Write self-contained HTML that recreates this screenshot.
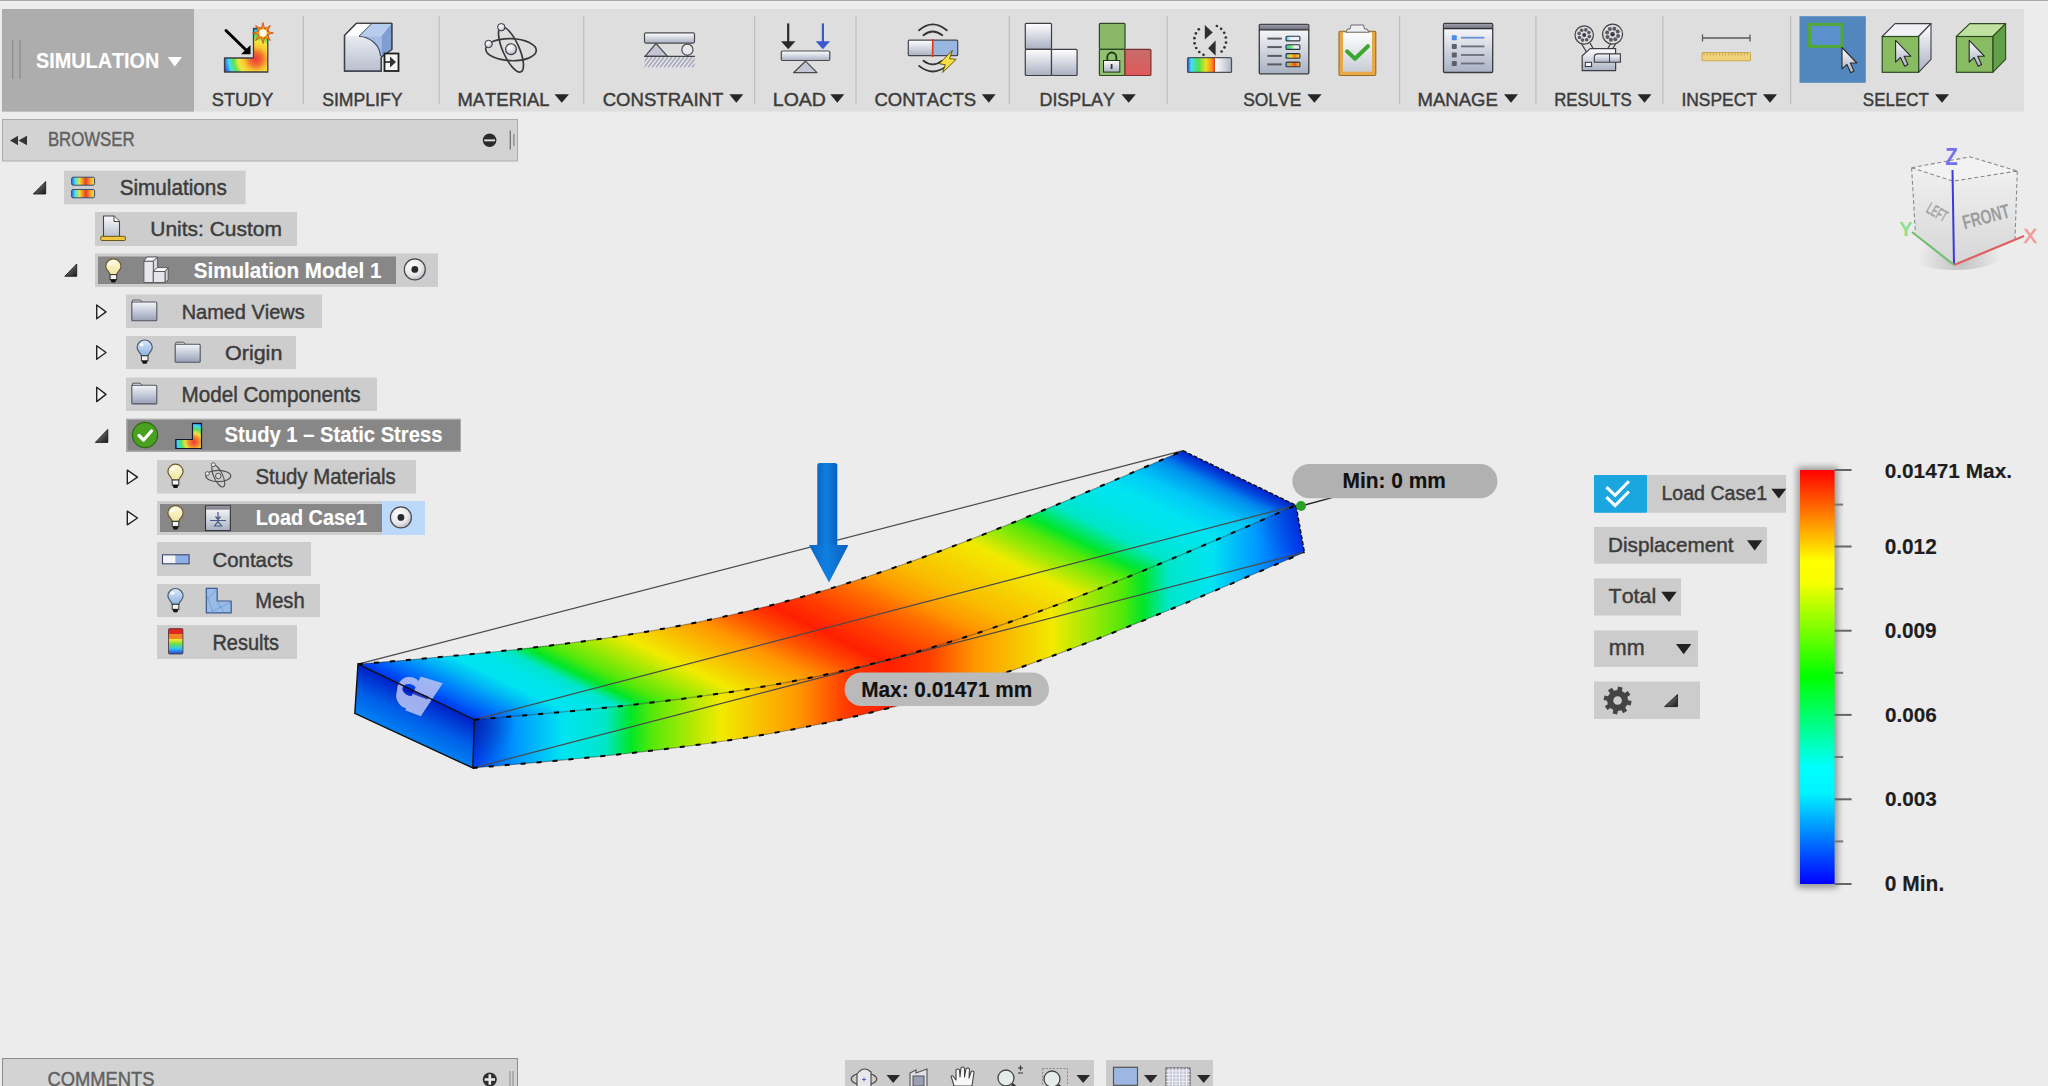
<!DOCTYPE html>
<html><head><meta charset="utf-8"><title>Fusion Simulation</title>
<style>html,body{margin:0;padding:0;width:2048px;height:1086px;overflow:hidden;background:#ececec;font-family:"Liberation Sans",sans-serif}
text{font-family:"Liberation Sans",sans-serif;font-kerning:none}</style></head>
<body><svg width="2048" height="1086" viewBox="0 0 2048 1086" style="position:absolute;left:0;top:0;font-family:'Liberation Sans',sans-serif;font-kerning:none"><defs><linearGradient id="gSilver" x1="0" y1="0" x2="0" y2="1"><stop offset="0" stop-color="#ffffff"/><stop offset="1" stop-color="#a9b0c2"/></linearGradient><linearGradient id="gSilver2" x1="0" y1="0" x2="0" y2="1"><stop offset="0" stop-color="#fbfbfd"/><stop offset="1" stop-color="#b9bfcf"/></linearGradient><linearGradient id="gBlueFace" x1="0" y1="0" x2="0" y2="1"><stop offset="0" stop-color="#c6d8f2"/><stop offset="1" stop-color="#7f9fd0"/></linearGradient><linearGradient id="gRainbowH" x1="0" y1="0" x2="1" y2="0"><stop offset="0" stop-color="#2050e0"/><stop offset="0.18" stop-color="#30e0f0"/><stop offset="0.4" stop-color="#40e040"/><stop offset="0.6" stop-color="#f0f020"/><stop offset="0.8" stop-color="#f89020"/><stop offset="1" stop-color="#e83020"/></linearGradient><linearGradient id="gRainbowV" x1="0" y1="0" x2="0" y2="1"><stop offset="0" stop-color="#e02020"/><stop offset="0.25" stop-color="#f08020"/><stop offset="0.45" stop-color="#f0e020"/><stop offset="0.65" stop-color="#40e040"/><stop offset="0.82" stop-color="#30d0f0"/><stop offset="1" stop-color="#2040e0"/></linearGradient><linearGradient id="gGreen" x1="0" y1="0" x2="0" y2="1"><stop offset="0" stop-color="#96c47a"/><stop offset="1" stop-color="#7cb05c"/></linearGradient><linearGradient id="gGreenTop" x1="0" y1="0" x2="0" y2="1"><stop offset="0" stop-color="#c8e8a8"/><stop offset="1" stop-color="#a8d488"/></linearGradient><linearGradient id="gRed" x1="0" y1="0" x2="0" y2="1"><stop offset="0" stop-color="#c86c6c"/><stop offset="1" stop-color="#e05a5a"/></linearGradient><linearGradient id="gBulbY" x1="0" y1="0" x2="0" y2="1"><stop offset="0" stop-color="#fffbe0"/><stop offset="1" stop-color="#f2e4a0"/></linearGradient><linearGradient id="gBulbB" x1="0" y1="0" x2="0" y2="1"><stop offset="0" stop-color="#d8e8fa"/><stop offset="1" stop-color="#8fb2e0"/></linearGradient><linearGradient id="gFolder" x1="0" y1="0" x2="0" y2="1"><stop offset="0" stop-color="#f4f6fa"/><stop offset="1" stop-color="#98a0b8"/></linearGradient><linearGradient id="gWinBody" x1="0" y1="0" x2="0" y2="1"><stop offset="0" stop-color="#ffffff"/><stop offset="1" stop-color="#a8b0c2"/></linearGradient><linearGradient id="gTitle" x1="0" y1="0" x2="0" y2="1"><stop offset="0" stop-color="#9a9aa8"/><stop offset="1" stop-color="#70707e"/></linearGradient><linearGradient id="gClip" x1="0" y1="0" x2="0" y2="1"><stop offset="0" stop-color="#ffffff"/><stop offset="1" stop-color="#c8ccd6"/></linearGradient><linearGradient id="gTri" x1="0" y1="0" x2="1" y2="1"><stop offset="0" stop-color="#909090"/><stop offset="1" stop-color="#1a1a1a"/></linearGradient><radialGradient id="gStudy" cx="256" cy="59" r="32" gradientUnits="userSpaceOnUse"><stop offset="0" stop-color="#f03838"/><stop offset="0.2" stop-color="#f07030"/><stop offset="0.38" stop-color="#f8c830"/><stop offset="0.55" stop-color="#f0e840"/><stop offset="0.7" stop-color="#60e050"/><stop offset="0.85" stop-color="#40e0f0"/><stop offset="1" stop-color="#3060e0"/></radialGradient><radialGradient id="gSph" cx="0.4" cy="0.35" r="0.7"><stop offset="0" stop-color="#ffffff"/><stop offset="0.6" stop-color="#d8d8e4"/><stop offset="1" stop-color="#9a9aa8"/></radialGradient><linearGradient id="gSolveBar" x1="0" y1="0" x2="1" y2="0"><stop offset="0" stop-color="#3050e0"/><stop offset="0.08" stop-color="#40e0f8"/><stop offset="0.25" stop-color="#50e050"/><stop offset="0.42" stop-color="#f0e020"/><stop offset="0.56" stop-color="#f88820"/><stop offset="0.62" stop-color="#e83a20"/><stop offset="0.63" stop-color="#ffffff"/><stop offset="1" stop-color="#b0b6c6"/></linearGradient><linearGradient id="gSb0" x1="0" y1="0" x2="1" y2="0"><stop offset="0" stop-color="#40c0f0"/><stop offset="0.3" stop-color="#e0f0ff"/><stop offset="0.65" stop-color="#f0f4fa"/><stop offset="1" stop-color="#e8eef8"/></linearGradient><linearGradient id="gSb1" x1="0" y1="0" x2="1" y2="0"><stop offset="0" stop-color="#40c0f0"/><stop offset="0.3" stop-color="#60e060"/><stop offset="0.65" stop-color="#f0f0f0"/><stop offset="1" stop-color="#e0e0e8"/></linearGradient><linearGradient id="gSb2" x1="0" y1="0" x2="1" y2="0"><stop offset="0" stop-color="#40c0f0"/><stop offset="0.3" stop-color="#f0e020"/><stop offset="0.65" stop-color="#f08020"/><stop offset="1" stop-color="#f0e040"/></linearGradient><linearGradient id="gSb3" x1="0" y1="0" x2="1" y2="0"><stop offset="0" stop-color="#40c0f0"/><stop offset="0.3" stop-color="#f0a020"/><stop offset="0.65" stop-color="#e85020"/><stop offset="1" stop-color="#f0d040"/></linearGradient><linearGradient id="gSimI" x1="0" y1="0" x2="1" y2="0"><stop offset="0" stop-color="#3060e0"/><stop offset="0.15" stop-color="#40e0f0"/><stop offset="0.35" stop-color="#f0e030"/><stop offset="0.62" stop-color="#f03a20"/><stop offset="0.8" stop-color="#f8a030"/><stop offset="1" stop-color="#f8e040"/></linearGradient><radialGradient id="gRad269" cx="412.8" cy="266.4" r="13.65" gradientUnits="userSpaceOnUse"><stop offset="0" stop-color="#ffffff"/><stop offset="0.7" stop-color="#e6e6ea"/><stop offset="1" stop-color="#b8b8c0"/></radialGradient><radialGradient id="gStudyS" cx="194" cy="442" r="20" gradientUnits="userSpaceOnUse"><stop offset="0" stop-color="#f03838"/><stop offset="0.25" stop-color="#f08830"/><stop offset="0.45" stop-color="#f0e040"/><stop offset="0.65" stop-color="#50e060"/><stop offset="0.82" stop-color="#40d8f0"/><stop offset="1" stop-color="#2050e0"/></radialGradient><radialGradient id="gRad517" cx="398.9" cy="514.4" r="13.65" gradientUnits="userSpaceOnUse"><stop offset="0" stop-color="#ffffff"/><stop offset="0.7" stop-color="#e6e6ea"/><stop offset="1" stop-color="#b8b8c0"/></radialGradient><linearGradient id="gResI" x1="0" y1="0" x2="0" y2="1"><stop offset="0" stop-color="#e02820"/><stop offset="0.22" stop-color="#e02820"/><stop offset="0.23" stop-color="#f08828"/><stop offset="0.42" stop-color="#f08828"/><stop offset="0.43" stop-color="#f8e830"/><stop offset="0.6" stop-color="#70e040"/><stop offset="0.78" stop-color="#30c8f0"/><stop offset="1" stop-color="#2040d8"/></linearGradient><radialGradient id="gVCsh" cx="1960" cy="262" r="42" gradientUnits="userSpaceOnUse"><stop offset="0" stop-color="#000" stop-opacity="0.18"/><stop offset="1" stop-color="#000" stop-opacity="0"/></radialGradient><linearGradient id="gVCf" x1="0" y1="0" x2="0" y2="1"><stop offset="0" stop-color="#f0f0f0"/><stop offset="1" stop-color="#d6d6d8"/></linearGradient><radialGradient id="gBarSh" cx="0" cy="0" r="1" gradientUnits="userSpaceOnUse"><stop offset="0" stop-color="#000" stop-opacity="0.35"/><stop offset="1" stop-color="#000" stop-opacity="0"/></radialGradient><filter id="blur4" x="-50%" y="-50%" width="200%" height="200%"><feGaussianBlur stdDeviation="3"/></filter><linearGradient id="gBar" x1="0" y1="0" x2="0" y2="1"><stop offset="0" stop-color="#ff0000"/><stop offset="0.11" stop-color="#ff8000"/><stop offset="0.22" stop-color="#ffff00"/><stop offset="0.27" stop-color="#f8ff00"/><stop offset="0.5" stop-color="#00ff00"/><stop offset="0.72" stop-color="#00ffff"/><stop offset="0.78" stop-color="#00f4ff"/><stop offset="1" stop-color="#0000ff"/></linearGradient></defs><rect x="0" y="0" width="2048" height="1.2" fill="#a6a6a6"/>
<rect x="0" y="1.2" width="2048" height="2" fill="#f0f0f0"/>
<rect x="2" y="9" width="2022" height="102.6" fill="#dedede"/>
<rect x="2" y="9" width="192" height="102.6" fill="#adadad"/>
<rect x="12" y="40" width="1.3" height="39" fill="#8e8e8e"/><rect x="19.3" y="40" width="1.3" height="39" fill="#8e8e8e"/>
<text transform="translate(36.03 68.00) scale(0.9339 1)" font-size="21.22" font-weight="bold" fill="#ffffff" stroke="#ffffff" stroke-width="0.15">SIMULATION</text>
<path d="M167.6 57 L182 57 L174.8 66.6 Z" fill="#ffffff"/>
<rect x="302.7" y="16" width="1.2" height="88" fill="#bdbdbd"/>
<rect x="438.6" y="16" width="1.2" height="88" fill="#bdbdbd"/>
<rect x="583.2" y="16" width="1.2" height="88" fill="#bdbdbd"/>
<rect x="754.0" y="16" width="1.2" height="88" fill="#bdbdbd"/>
<rect x="855.4" y="16" width="1.2" height="88" fill="#bdbdbd"/>
<rect x="1008.7" y="16" width="1.2" height="88" fill="#bdbdbd"/>
<rect x="1166.6" y="16" width="1.2" height="88" fill="#bdbdbd"/>
<rect x="1399.0" y="16" width="1.2" height="88" fill="#bdbdbd"/>
<rect x="1535.3" y="16" width="1.2" height="88" fill="#bdbdbd"/>
<rect x="1662.3" y="16" width="1.2" height="88" fill="#bdbdbd"/>
<rect x="1790.0" y="16" width="1.2" height="88" fill="#bdbdbd"/>
<text transform="translate(211.77 106.10) scale(0.9477 1)" font-size="19.19" fill="#3b3b3b" stroke="#3b3b3b" stroke-width="0.45">STUDY</text>
<text transform="translate(322.20 106.10) scale(0.9172 1)" font-size="19.19" fill="#3b3b3b" stroke="#3b3b3b" stroke-width="0.45">SIMPLIFY</text>
<text transform="translate(457.49 106.10) scale(0.9601 1)" font-size="19.19" fill="#3b3b3b" stroke="#3b3b3b" stroke-width="0.45">MATERIAL</text>
<path d="M554.5 94.2 L569.0 94.2 L561.8 102.8 Z" fill="#262626"/>
<text transform="translate(602.66 106.10) scale(0.9676 1)" font-size="19.19" fill="#3b3b3b" stroke="#3b3b3b" stroke-width="0.45">CONSTRAINT</text>
<path d="M729.3 94.2 L743.3 94.2 L736.3 102.8 Z" fill="#262626"/>
<text transform="translate(772.80 106.10) scale(1.0170 1)" font-size="19.19" fill="#3b3b3b" stroke="#3b3b3b" stroke-width="0.45">LOAD</text>
<path d="M830.3 94.2 L844.3 94.2 L837.3 102.8 Z" fill="#262626"/>
<text transform="translate(874.46 106.10) scale(0.9636 1)" font-size="19.19" fill="#3b3b3b" stroke="#3b3b3b" stroke-width="0.45">CONTACTS</text>
<path d="M981.8 94.2 L995.7 94.2 L988.8 102.8 Z" fill="#262626"/>
<text transform="translate(1039.54 106.10) scale(0.9298 1)" font-size="19.19" fill="#3b3b3b" stroke="#3b3b3b" stroke-width="0.45">DISPLAY</text>
<path d="M1121.5 94.2 L1135.8 94.2 L1128.7 102.8 Z" fill="#262626"/>
<text transform="translate(1243.21 106.10) scale(0.9071 1)" font-size="19.19" fill="#3b3b3b" stroke="#3b3b3b" stroke-width="0.45">SOLVE</text>
<path d="M1307.3 94.2 L1321.6 94.2 L1314.4 102.8 Z" fill="#262626"/>
<text transform="translate(1417.48 106.10) scale(0.9659 1)" font-size="19.19" fill="#3b3b3b" stroke="#3b3b3b" stroke-width="0.45">MANAGE</text>
<path d="M1504.0 94.2 L1518.0 94.2 L1511.0 102.8 Z" fill="#262626"/>
<text transform="translate(1554.22 106.10) scale(0.8764 1)" font-size="19.19" fill="#3b3b3b" stroke="#3b3b3b" stroke-width="0.45">RESULTS</text>
<path d="M1637.5 94.2 L1651.5 94.2 L1644.5 102.8 Z" fill="#262626"/>
<text transform="translate(1681.39 106.10) scale(0.9081 1)" font-size="19.19" fill="#3b3b3b" stroke="#3b3b3b" stroke-width="0.45">INSPECT</text>
<path d="M1763.0 94.2 L1777.0 94.2 L1770.0 102.8 Z" fill="#262626"/>
<text transform="translate(1862.83 106.10) scale(0.8851 1)" font-size="19.19" fill="#3b3b3b" stroke="#3b3b3b" stroke-width="0.45">SELECT</text>
<path d="M1935.0 94.2 L1949.0 94.2 L1942.0 102.8 Z" fill="#262626"/>
<path d="M224.5 58 L253.5 58 L253.5 28.5 L267.8 28.5 L267.8 72 L224.5 72 Z" fill="url(#gStudy)" stroke="#3c3c48" stroke-width="1.3" stroke-linejoin="round"/>
<path d="M226 30.5 L246 50" stroke="#000" stroke-width="3" stroke-linecap="round"/>
<path d="M250.5 54.2 L241 54.2 L250.5 45 Z" fill="#000"/>
<path d="M263.0 22.5 L264.7 28.8 L270.4 25.6 L267.2 31.3 L273.5 33.0 L267.2 34.7 L270.4 40.4 L264.7 37.2 L263.0 43.5 L261.3 37.2 L255.6 40.4 L258.8 34.7 L252.5 33.0 L258.8 31.3 L255.6 25.6 L261.3 28.8 Z" fill="#f49a10" stroke="#d04a10" stroke-width="0.8"/>
<circle cx="263" cy="33" r="3.8" fill="#fffbe8"/>
<path d="M344.5 35.5 L356.5 23.3 L391.8 23.3 L391.8 49.5 L381.3 57 L381.3 71.2 L344.5 71.2 Z" fill="url(#gSilver2)" stroke="#3e4048" stroke-width="1.3" stroke-linejoin="round"/>
<path d="M344.5 35.5 L356.5 23.3 L372 23.3 L359 36.2 Z" fill="#ffffff"/>
<path d="M359 36.2 L372 23.3 L391.8 23.3 L381.3 36.2 Z" fill="#b8cdee"/>
<path d="M381.3 36.2 L391.8 23.3 L391.8 49.5 L381.3 57 Z" fill="#7f9fd2"/>
<path d="M359 36.2 C370 37 380 45 380.5 56 L381.3 57 L381.3 36.2 Z" fill="#a4bce4"/>
<path d="M359 36.2 C370 37 380 45 380.5 56" fill="none" stroke="#3e4a60" stroke-width="1.1"/>
<path d="M359 36.2 L372 23.3" stroke="#3e4a60" stroke-width="1"/>
<path d="M344.5 35.5 L356.5 23.3 L391.8 23.3 L391.8 49.5 L381.3 57 L381.3 71.2 L344.5 71.2 Z" fill="none" stroke="#3e4048" stroke-width="1.3" stroke-linejoin="round"/>
<rect x="384.5" y="53.5" width="14" height="17.5" fill="#f4f4f4" stroke="#1e1e1e" stroke-width="1.8"/>
<path d="M384 62 L391 62" stroke="#222" stroke-width="1.6"/><path d="M390 56.5 L396 62 L390 67.5 Z" fill="#333"/>
<g fill="none" stroke="#3a3a3a" stroke-width="1.7"><ellipse cx="511" cy="49.7" rx="25.3" ry="11" transform="rotate(2 511 49.7)"/><ellipse cx="511" cy="49.4" rx="8.2" ry="24.5" transform="rotate(-24 511 49.4)"/></g>
<circle cx="511" cy="49.2" r="5.4" fill="url(#gSph)" stroke="#333" stroke-width="1.1"/>
<circle cx="501.3" cy="27.2" r="3.7" fill="url(#gSph)" stroke="#333" stroke-width="1"/>
<circle cx="488.6" cy="44" r="3.7" fill="url(#gSph)" stroke="#333" stroke-width="1"/>
<rect x="644.5" y="32.8" width="50" height="10.3" rx="1.5" fill="url(#gSilver)" stroke="#4a4a4e" stroke-width="1.2"/>
<path d="M645 56.3 L656 43.5 L667.5 56.3 Z" fill="#c4c6d4" stroke="#4a4a4e" stroke-width="1.2" stroke-linejoin="round"/>
<circle cx="687.4" cy="49.7" r="5.6" fill="#e8e8ee" stroke="#4a4a4e" stroke-width="1.2"/>
<path d="M644 56.3 L695 56.3" stroke="#444" stroke-width="1.3"/>
<rect x="644.5" y="57" width="50" height="10.5" fill="#e4e4ec"/>
<svg x="644.5" y="57" width="50" height="10.5" viewBox="644.5 57 50 10.5" overflow="hidden"><path d="M640.0 67.5 L648.0 57" stroke="#a8aab8" stroke-width="1.6"/><path d="M644.0 67.5 L652.0 57" stroke="#a8aab8" stroke-width="1.6"/><path d="M648.0 67.5 L656.0 57" stroke="#a8aab8" stroke-width="1.6"/><path d="M652.0 67.5 L660.0 57" stroke="#a8aab8" stroke-width="1.6"/><path d="M656.0 67.5 L664.0 57" stroke="#a8aab8" stroke-width="1.6"/><path d="M660.0 67.5 L668.0 57" stroke="#a8aab8" stroke-width="1.6"/><path d="M664.0 67.5 L672.0 57" stroke="#a8aab8" stroke-width="1.6"/><path d="M668.0 67.5 L676.0 57" stroke="#a8aab8" stroke-width="1.6"/><path d="M672.0 67.5 L680.0 57" stroke="#a8aab8" stroke-width="1.6"/><path d="M676.0 67.5 L684.0 57" stroke="#a8aab8" stroke-width="1.6"/><path d="M680.0 67.5 L688.0 57" stroke="#a8aab8" stroke-width="1.6"/><path d="M684.0 67.5 L692.0 57" stroke="#a8aab8" stroke-width="1.6"/><path d="M688.0 67.5 L696.0 57" stroke="#a8aab8" stroke-width="1.6"/><path d="M692.0 67.5 L700.0 57" stroke="#a8aab8" stroke-width="1.6"/></svg>
<path d="M788.2 23.4 L788.2 42" stroke="#2a2a2a" stroke-width="2.2"/><path d="M781 41.3 L795.4 41.3 L788.2 49.2 Z" fill="#2a2a2a"/>
<path d="M822.9 23.4 L822.9 42" stroke="#3a58c8" stroke-width="2.2"/><path d="M815.7 41.3 L830.1 41.3 L822.9 49.2 Z" fill="#3a58d0"/>
<rect x="781.3" y="51" width="48.5" height="9.5" rx="1.2" fill="url(#gSilver)" stroke="#4a4a4e" stroke-width="1.2"/>
<path d="M793.5 72.7 L805.5 61.2 L817 72.7 Z" fill="#c4c6d4" stroke="#4a4a4e" stroke-width="1.2" stroke-linejoin="round"/>
<g fill="none" stroke="#333" stroke-width="1.8" stroke-linecap="round"><path d="M919 30.3 Q932.7 18.5 946.8 30.3"/><path d="M923.4 35.3 Q932.7 27.8 942.3 35.3"/><path d="M923.4 60.8 Q932.7 68 942.3 60.8"/><path d="M919 65.9 Q932.7 77 946.8 65.9"/></g>
<rect x="908.3" y="40.2" width="24.4" height="15.5" fill="url(#gSilver)"/>
<rect x="932.7" y="40.2" width="25" height="15.5" fill="#98b6e0"/>
<rect x="908.3" y="40.2" width="49.4" height="15.5" rx="1" fill="none" stroke="#44464e" stroke-width="1.2"/>
<path d="M932.7 39 L932.7 57" stroke="#e03a10" stroke-width="1.6"/>
<path d="M952.4 50.3 L939.3 63.8 L945.3 64.7 L942.6 72.5 L956.2 59.3 L949.6 58.7 Z" fill="#f8e040" stroke="#6a5a10" stroke-width="1" stroke-linejoin="round"/>
<g stroke="#3e3e44" stroke-width="1.2" fill="url(#gSilver)"><rect x="1025.3" y="23.3" width="26.2" height="26" rx="1"/><rect x="1025.3" y="49.3" width="26.2" height="26.2" rx="1"/><rect x="1051.5" y="49.3" width="25.6" height="26.2" rx="1"/></g>
<rect x="1099.4" y="23.3" width="25.6" height="26" rx="1" fill="#88b868" stroke="#2e4a24" stroke-width="1.2"/>
<rect x="1099.4" y="49.3" width="25.6" height="26.2" rx="1" fill="#90c070" stroke="#2e4a24" stroke-width="1.2"/>
<rect x="1125" y="49.3" width="25.9" height="26.2" rx="1" fill="url(#gRed)" stroke="#7a3030" stroke-width="1.2"/>
<path d="M1107.3 60.6 L1107.3 57 A4.5 4.5 0 0 1 1116.3 57 L1116.3 60.6" fill="none" stroke="#1c3a10" stroke-width="1.8"/>
<rect x="1103.5" y="60.5" width="16.3" height="11.6" fill="url(#gSilver)" stroke="#1c3a10" stroke-width="1"/>
<path d="M1111.6 64 L1111.6 69" stroke="#334" stroke-width="1.8"/>
<rect x="1187.6" y="57.6" width="43.9" height="14.8" rx="1.2" fill="url(#gSolveBar)" stroke="#4a5058" stroke-width="1.3"/>
<circle cx="1203.5" cy="54.8" r="1.35" fill="#333"/><circle cx="1199.3" cy="52.0" r="1.35" fill="#333"/><circle cx="1196.2" cy="48.0" r="1.35" fill="#333"/><circle cx="1194.6" cy="43.3" r="1.35" fill="#333"/><circle cx="1194.4" cy="38.2" r="1.35" fill="#333"/><circle cx="1195.9" cy="33.4" r="1.35" fill="#333"/><circle cx="1198.8" cy="29.3" r="1.35" fill="#333"/><circle cx="1216.9" cy="26.0" r="1.35" fill="#333"/><circle cx="1221.1" cy="28.8" r="1.35" fill="#333"/><circle cx="1224.2" cy="32.8" r="1.35" fill="#333"/><circle cx="1225.8" cy="37.5" r="1.35" fill="#333"/><circle cx="1226.0" cy="42.6" r="1.35" fill="#333"/><circle cx="1224.5" cy="47.4" r="1.35" fill="#333"/><circle cx="1221.6" cy="51.5" r="1.35" fill="#333"/>
<path d="M1204.8 24.9 L1204.8 39.5 L1212.7 32.4 Z" fill="#2e2e2e"/><path d="M1215.6 40.4 L1215.6 55.7 L1208.1 48.2 Z" fill="#2e2e2e"/>
<rect x="1259.3" y="24.3" width="49.5" height="49.5" rx="1" fill="url(#gWinBody)" stroke="#3a3a40" stroke-width="1.3"/>
<rect x="1259.9" y="24.9" width="48.3" height="4.8" fill="url(#gTitle)"/><path d="M1259.3 29.8 L1308.8 29.8" stroke="#2a2a30" stroke-width="1.2"/>
<path d="M1267.4 38.6 L1281.8 38.6" stroke="#5a5a62" stroke-width="2"/>
<rect x="1286" y="36.3" width="13.9" height="4.6" rx="1" fill="url(#gSb0)" stroke="#2a3440" stroke-width="1.1"/>
<path d="M1267.4 47.1 L1281.8 47.1" stroke="#5a5a62" stroke-width="2"/>
<rect x="1286" y="44.8" width="13.9" height="4.6" rx="1" fill="url(#gSb1)" stroke="#2a3440" stroke-width="1.1"/>
<path d="M1267.4 55.9 L1281.8 55.9" stroke="#5a5a62" stroke-width="2"/>
<rect x="1286" y="53.6" width="13.9" height="4.6" rx="1" fill="url(#gSb2)" stroke="#2a3440" stroke-width="1.1"/>
<path d="M1267.4 64.4 L1281.8 64.4" stroke="#5a5a62" stroke-width="2"/>
<rect x="1286" y="62.1" width="13.9" height="4.6" rx="1" fill="url(#gSb3)" stroke="#2a3440" stroke-width="1.1"/>
<rect x="1339" y="31.2" width="36.8" height="44.3" rx="1.2" fill="#e8a848" stroke="#9a6a20" stroke-width="1.1"/>
<rect x="1343" y="32.5" width="29" height="39.2" fill="url(#gClip)"/>
<path d="M1345.8 32.2 L1347.5 29 L1350 29 L1351 25 L1363.5 25 L1364.5 29 L1367 29 L1368.9 32.2 Z" fill="#f0f0f2" stroke="#6a6a70" stroke-width="1"/>
<path d="M1347 51.3 L1355 58.7 L1367.9 46.2" fill="none" stroke="#3ca830" stroke-width="4" stroke-linecap="round" stroke-linejoin="round"/>
<rect x="1443.5" y="23.5" width="49.2" height="49" rx="1.2" fill="url(#gWinBody)" stroke="#3a3a40" stroke-width="1.3"/>
<rect x="1444.1" y="24.1" width="48" height="4.4" fill="url(#gTitle)"/><path d="M1443.5 28.6 L1492.7 28.6" stroke="#2a2a30" stroke-width="1.2"/>
<rect x="1451.8" y="35.2" width="5" height="5" rx="0.8" fill="#4a8ae8"/>
<path d="M1461 37.7 L1484.4 37.7" stroke="#6a90d8" stroke-width="1.8"/>
<rect x="1451.8" y="43.9" width="5" height="5" rx="0.8" fill="#5e6070"/>
<path d="M1461 46.4 L1484.4 46.4" stroke="#6a6e7a" stroke-width="1.8"/>
<rect x="1451.8" y="52.5" width="5" height="5" rx="0.8" fill="#5e6070"/>
<path d="M1461 55.0 L1484.4 55.0" stroke="#6a6e7a" stroke-width="1.8"/>
<rect x="1451.8" y="61.0" width="5" height="5" rx="0.8" fill="#5e6070"/>
<path d="M1461 63.5 L1484.4 63.5" stroke="#6a6e7a" stroke-width="1.8"/>
<circle cx="1584.2" cy="35.0" r="9.2" fill="#dcdce2" stroke="#444" stroke-width="1.2"/>
<circle cx="1589.3" cy="36.6" r="1.8" fill="#5a5a62"/>
<circle cx="1586.7" cy="39.7" r="1.8" fill="#5a5a62"/>
<circle cx="1582.6" cy="40.1" r="1.8" fill="#5a5a62"/>
<circle cx="1579.5" cy="37.5" r="1.8" fill="#5a5a62"/>
<circle cx="1579.1" cy="33.4" r="1.8" fill="#5a5a62"/>
<circle cx="1581.7" cy="30.3" r="1.8" fill="#5a5a62"/>
<circle cx="1585.8" cy="29.9" r="1.8" fill="#5a5a62"/>
<circle cx="1588.9" cy="32.5" r="1.8" fill="#5a5a62"/>
<circle cx="1584.2" cy="35.0" r="2.0" fill="#3a3a40"/>
<circle cx="1612.6" cy="34.2" r="10.0" fill="#dcdce2" stroke="#444" stroke-width="1.2"/>
<circle cx="1618.1" cy="35.9" r="2.0" fill="#5a5a62"/>
<circle cx="1615.3" cy="39.3" r="2.0" fill="#5a5a62"/>
<circle cx="1610.9" cy="39.7" r="2.0" fill="#5a5a62"/>
<circle cx="1607.5" cy="36.9" r="2.0" fill="#5a5a62"/>
<circle cx="1607.1" cy="32.5" r="2.0" fill="#5a5a62"/>
<circle cx="1609.9" cy="29.1" r="2.0" fill="#5a5a62"/>
<circle cx="1614.3" cy="28.7" r="2.0" fill="#5a5a62"/>
<circle cx="1617.7" cy="31.5" r="2.0" fill="#5a5a62"/>
<circle cx="1612.6" cy="34.2" r="2.2" fill="#3a3a40"/>
<path d="M1581 43 L1589 56 M1590 43 L1594 50 M1607 50 L1611 43 M1612 50 L1616 43" stroke="#444" stroke-width="1.3"/>
<path d="M1582.2 55.7 L1590.1 48.6 L1615.6 48.6 L1615.6 70.7 L1582.2 70.7 Z" fill="url(#gSilver)" stroke="#3e3e44" stroke-width="1.2" stroke-linejoin="round"/>
<path d="M1594.3 62.3 L1594.3 57 Q1594.3 53.9 1598 53.9 L1620.4 53.9 L1620.4 62.3 Z" fill="url(#gSilver)" stroke="#3e3e44" stroke-width="1.1"/>
<path d="M1609.5 53.9 L1609.5 62.3" stroke="#3e3e44" stroke-width="1"/>
<rect x="1585.3" y="62.3" width="6.3" height="4.2" fill="#f4f4f8" stroke="#333" stroke-width="1"/>
<path d="M1702.5 38 L1750 38 M1702.5 34.5 L1702.5 41.5 M1750 34.5 L1750 41.5" stroke="#5a5a5a" stroke-width="1.3"/>
<rect x="1702" y="52.5" width="48.5" height="8.3" rx="0.8" fill="#f0d27a" stroke="#c8a850" stroke-width="1"/>
<path d="M1704.0 52.8 L1704.0 55.5" stroke="#b89840" stroke-width="0.7"/><path d="M1707.1 52.8 L1707.1 55.5" stroke="#b89840" stroke-width="0.7"/><path d="M1710.2 52.8 L1710.2 55.5" stroke="#b89840" stroke-width="0.7"/><path d="M1713.3 52.8 L1713.3 55.5" stroke="#b89840" stroke-width="0.7"/><path d="M1716.4 52.8 L1716.4 55.5" stroke="#b89840" stroke-width="0.7"/><path d="M1719.5 52.8 L1719.5 55.5" stroke="#b89840" stroke-width="0.7"/><path d="M1722.6 52.8 L1722.6 55.5" stroke="#b89840" stroke-width="0.7"/><path d="M1725.7 52.8 L1725.7 55.5" stroke="#b89840" stroke-width="0.7"/><path d="M1728.8 52.8 L1728.8 55.5" stroke="#b89840" stroke-width="0.7"/><path d="M1731.9 52.8 L1731.9 55.5" stroke="#b89840" stroke-width="0.7"/><path d="M1735.0 52.8 L1735.0 55.5" stroke="#b89840" stroke-width="0.7"/><path d="M1738.1 52.8 L1738.1 55.5" stroke="#b89840" stroke-width="0.7"/><path d="M1741.2 52.8 L1741.2 55.5" stroke="#b89840" stroke-width="0.7"/><path d="M1744.3 52.8 L1744.3 55.5" stroke="#b89840" stroke-width="0.7"/><path d="M1747.4 52.8 L1747.4 55.5" stroke="#b89840" stroke-width="0.7"/>
<rect x="1799.5" y="16.2" width="66.3" height="66.6" fill="#5287bd"/>
<rect x="1809.5" y="24.4" width="32.5" height="22" fill="#5a90cc" stroke="#50a838" stroke-width="3"/>
<path d="M1842.0 47.5 L1842.0 68.8 L1846.8 64.3 L1850.7 72.7 L1854.1 71.0 L1850.3 63.0 L1856.8 63.0 Z" fill="url(#gSilver)" stroke="#2a2a2a" stroke-width="1.1" stroke-linejoin="round"/>
<path d="M1882.2 36.5 L1895 23.6 L1931 23.6 L1918.6 36.5 Z" fill="#f2f2f6" stroke="#3e3e44" stroke-width="1.1" stroke-linejoin="round"/>
<path d="M1918.6 36.5 L1931 23.6 L1931 59.4 L1918.6 72.3 Z" fill="url(#gSilver)" stroke="#3e3e44" stroke-width="1.1" stroke-linejoin="round"/>
<rect x="1882.2" y="36.5" width="36.4" height="35.8" fill="#88bb62" stroke="#2e4a22" stroke-width="1.2"/>
<path d="M1895.6 40.3 L1895.6 62.1 L1900.5 57.5 L1904.6 66.2 L1908.0 64.4 L1904.1 56.2 L1910.8 56.2 Z" fill="url(#gSilver)" stroke="#2a2a2a" stroke-width="1.1" stroke-linejoin="round"/>
<path d="M1956.4 36.5 L1969.7 23.6 L2005.6 23.6 L1992.8 36.5 Z" fill="#c0e2a0" stroke="#2e4a22" stroke-width="1.1" stroke-linejoin="round"/>
<path d="M1992.8 36.5 L2005.6 23.6 L2005.6 59.4 L1992.8 72.3 Z" fill="#62a048" stroke="#2e4a22" stroke-width="1.1" stroke-linejoin="round"/>
<rect x="1956.4" y="36.5" width="36.4" height="35.8" fill="#88bb62" stroke="#2e4a22" stroke-width="1.2"/>
<path d="M1969.2 40.3 L1969.2 62.1 L1974.1 57.5 L1978.2 66.2 L1981.6 64.4 L1977.7 56.2 L1984.4 56.2 Z" fill="url(#gSilver)" stroke="#2a2a2a" stroke-width="1.1" stroke-linejoin="round"/>
<rect x="2.5" y="119.5" width="515" height="41.5" fill="#d3d3d3" stroke="#ababab" stroke-width="1"/>
<path d="M10 140.5 L18 135.8 L18 145.3 Z M18.5 140.5 L27 135.8 L27 145.3 Z" fill="#333"/>
<text transform="translate(47.92 146.20) scale(0.8135 1)" font-size="20.64" fill="#616161" stroke="#616161" stroke-width="0.45">BROWSER</text>
<circle cx="489.6" cy="140.3" r="6.8" fill="#2a2a2a"/><rect x="484.2" y="139.4" width="10.8" height="1.9" fill="#e0e0e0"/>
<rect x="509.6" y="130.5" width="1.4" height="19" fill="#7a7a7a"/><rect x="513.2" y="134" width="1.3" height="12" fill="#8a8a8a"/>
<rect x="64.0" y="170.7" width="181.6" height="33.6" fill="#cdcdcd"/>
<text transform="translate(119.66 194.80) scale(0.9763 1)" font-size="21.22" fill="#3c3c3c" stroke="#3c3c3c" stroke-width="0.45">Simulations</text>
<rect x="95.0" y="212.0" width="202.0" height="34.0" fill="#cdcdcd"/>
<text transform="translate(150.28 236.20) scale(0.9952 1)" font-size="21.08" fill="#3c3c3c" stroke="#3c3c3c" stroke-width="0.45">Units: Custom</text>
<rect x="95.0" y="253.4" width="343.0" height="33.6" fill="#cdcdcd"/>
<rect x="98.0" y="256.5" width="298.0" height="27.5" fill="#878787"/>
<text transform="translate(193.71 277.60) scale(0.9332 1)" font-size="22.09" font-weight="bold" fill="#ffffff" stroke="#ffffff" stroke-width="0.15">Simulation Model 1</text>
<rect x="126.0" y="294.5" width="196.0" height="33.5" fill="#cdcdcd"/>
<text transform="translate(181.66 318.70) scale(0.9531 1)" font-size="20.93" fill="#3c3c3c" stroke="#3c3c3c" stroke-width="0.45">Named Views</text>
<rect x="126.0" y="336.0" width="170.0" height="33.0" fill="#cdcdcd"/>
<text transform="translate(224.98 360.00) scale(1.0284 1)" font-size="20.93" fill="#3c3c3c" stroke="#3c3c3c" stroke-width="0.45">Origin</text>
<rect x="126.0" y="377.5" width="251.0" height="33.5" fill="#cdcdcd"/>
<text transform="translate(181.51 401.80) scale(0.9598 1)" font-size="21.51" fill="#3c3c3c" stroke="#3c3c3c" stroke-width="0.45">Model Components</text>
<rect x="126.0" y="418.6" width="335.0" height="33.4" fill="#ababab"/>
<rect x="127.5" y="420.0" width="332.5" height="30.5" fill="#878787"/>
<text transform="translate(224.62 442.40) scale(0.9328 1)" font-size="21.66" font-weight="bold" fill="#ffffff" stroke="#ffffff" stroke-width="0.15">Study 1 – Static Stress</text>
<rect x="157.0" y="460.0" width="259.0" height="33.5" fill="#cdcdcd"/>
<text transform="translate(255.48 483.80) scale(0.9468 1)" font-size="21.51" fill="#3c3c3c" stroke="#3c3c3c" stroke-width="0.45">Study Materials</text>
<rect x="157.0" y="501.0" width="268.0" height="34.0" fill="#bcd8fb"/>
<rect x="157.0" y="501.0" width="225.0" height="34.0" fill="#cdcdcd"/>
<rect x="160.0" y="504.0" width="222.0" height="28.0" fill="#878787"/>
<text transform="translate(255.67 525.30) scale(0.9179 1)" font-size="21.66" font-weight="bold" fill="#ffffff" stroke="#ffffff" stroke-width="0.15">Load Case1</text>
<rect x="157.0" y="542.0" width="154.0" height="34.0" fill="#cdcdcd"/>
<text transform="translate(212.56 566.70) scale(0.9811 1)" font-size="20.78" fill="#3c3c3c" stroke="#3c3c3c" stroke-width="0.45">Contacts</text>
<rect x="157.0" y="584.0" width="163.0" height="33.0" fill="#cdcdcd"/>
<text transform="translate(255.34 608.20) scale(0.9322 1)" font-size="21.66" fill="#3c3c3c" stroke="#3c3c3c" stroke-width="0.45">Mesh</text>
<rect x="157.0" y="625.0" width="140.0" height="34.0" fill="#cdcdcd"/>
<text transform="translate(212.46 649.60) scale(0.9035 1)" font-size="22.09" fill="#3c3c3c" stroke="#3c3c3c" stroke-width="0.45">Results</text>
<path d="M33.3 194.0 L45.7 181.5 L45.7 194.0 Z" fill="url(#gTri)" stroke="#111" stroke-width="0.8" stroke-linejoin="round"/>
<path d="M64.8 276.3 L76.7 264.0 L76.7 276.3 Z" fill="url(#gTri)" stroke="#111" stroke-width="0.8" stroke-linejoin="round"/>
<path d="M95.3 442.4 L107.8 429.4 L107.8 442.4 Z" fill="url(#gTri)" stroke="#111" stroke-width="0.8" stroke-linejoin="round"/>
<path d="M96.7 305.0 L106.0 311.9 L96.7 318.8 Z" fill="#f4f4f4" stroke="#222" stroke-width="1.4" stroke-linejoin="round"/>
<path d="M96.7 345.7 L106.0 352.5 L96.7 359.3 Z" fill="#f4f4f4" stroke="#222" stroke-width="1.4" stroke-linejoin="round"/>
<path d="M96.7 387.2 L106.0 394.4 L96.7 401.6 Z" fill="#f4f4f4" stroke="#222" stroke-width="1.4" stroke-linejoin="round"/>
<path d="M127.3 470.2 L137.5 477.1 L127.3 484.0 Z" fill="#f4f4f4" stroke="#222" stroke-width="1.4" stroke-linejoin="round"/>
<path d="M127.3 511.1 L137.5 518.0 L127.3 524.8 Z" fill="#f4f4f4" stroke="#222" stroke-width="1.4" stroke-linejoin="round"/>
<rect x="71.6" y="177.2" width="23" height="8" rx="1.5" fill="url(#gSimI)" stroke="#3a4a70" stroke-width="1"/>
<rect x="71.6" y="189.5" width="23" height="8.3" rx="1.5" fill="url(#gSimI)" stroke="#3a4a70" stroke-width="1"/>
<path d="M103.5 216 L114 216 L119.5 221.5 L119.5 237 L103.5 237 Z" fill="url(#gSilver2)" stroke="#444" stroke-width="1.1" stroke-linejoin="round"/>
<path d="M114 216 L114 221.5 L119.5 221.5" fill="#f8f8f8" stroke="#444" stroke-width="1"/>
<rect x="100.8" y="236.3" width="24.5" height="4.2" rx="0.8" fill="#f0c840" stroke="#6a5418" stroke-width="1"/>
<path d="M110.1 274.6 C109.6 271.8 105.8 269.8 105.8 266.4 A7.6 7.6 0 1 1 121.0 266.4 C121.0 269.8 117.2 271.8 116.7 274.6 Z" fill="url(#gBulbY)" stroke="#6a5a30" stroke-width="1.2"/><rect x="110.1" y="274.6" width="6.6" height="5" fill="#f4f4f4" stroke="#333" stroke-width="1"/><path d="M110.4 279.6 L116.4 279.6 L115.2 282.6 L111.6 282.6 Z" fill="#111"/><ellipse cx="110.4" cy="263.6" rx="2.2" ry="1.8" fill="#ffffff" opacity="0.75"/>
<g stroke="#555" stroke-width="0.9" stroke-linejoin="round"><path d="M143.9 261.3 L147 257 L157.6 257 L153.3 261.3 Z" fill="#fafafa"/><path d="M153.3 261.3 L157.6 257 L157.6 267.6 L153.3 271.5 Z" fill="#d8d8de"/><path d="M143.9 261.3 L153.3 261.3 L153.3 282.5 L143.9 282.5 Z" fill="#e8e8ee"/><path d="M153.3 271.5 L157 267.6 L168.2 267.6 L165 271.5 Z" fill="#fafafa"/><path d="M165 271.5 L168.2 267.6 L168.2 280 L165 282.5 Z" fill="#d0d0d8"/><path d="M153.3 271.5 L165 271.5 L165 282.5 L153.3 282.5 Z" fill="#e4e4ea"/></g>
<circle cx="414.8" cy="269.4" r="10.5" fill="url(#gRad269)" stroke="#4a4a4a" stroke-width="1.2"/><circle cx="414.8" cy="269.4" r="3.4" fill="#2a2a2a"/>
<path d="M131.8 302.7 L132.8 300.0 L140.3 300.0 L141.8 301.8 L141.8 302.7 L131.8 302.7 Z" fill="#e6e8ee" stroke="#555" stroke-width="1"/><rect x="131.8" y="302.0" width="25.0" height="18.7" rx="1" fill="url(#gFolder)" stroke="#505560" stroke-width="1.1"/>
<path d="M141.4 355.8 C140.9 353.0 137.1 351.0 137.1 347.6 A7.6 7.6 0 1 1 152.3 347.6 C152.3 351.0 148.5 353.0 148.0 355.8 Z" fill="url(#gBulbB)" stroke="#4a5a70" stroke-width="1.2"/><rect x="141.4" y="355.8" width="6.6" height="5" fill="#f4f4f4" stroke="#333" stroke-width="1"/><path d="M141.7 360.8 L147.7 360.8 L146.5 363.8 L142.9 363.8 Z" fill="#111"/><ellipse cx="141.7" cy="344.8" rx="2.2" ry="1.8" fill="#ffffff" opacity="0.75"/>
<path d="M175.2 344.9 L176.2 342.2 L183.7 342.2 L185.2 344.0 L185.2 344.9 L175.2 344.9 Z" fill="#e6e8ee" stroke="#555" stroke-width="1"/><rect x="175.2" y="344.2" width="25.0" height="18.0" rx="1" fill="url(#gFolder)" stroke="#505560" stroke-width="1.1"/>
<path d="M131.8 385.9 L132.8 383.2 L140.3 383.2 L141.8 385.0 L141.8 385.9 L131.8 385.9 Z" fill="#e6e8ee" stroke="#555" stroke-width="1"/><rect x="131.8" y="385.2" width="25.0" height="18.7" rx="1" fill="url(#gFolder)" stroke="#505560" stroke-width="1.1"/>
<circle cx="145" cy="435" r="12.6" fill="#4aa020" stroke="#2e6a10" stroke-width="1.2"/>
<path d="M139 435.5 L143.5 440 L151.5 431" fill="none" stroke="#ffffff" stroke-width="3.2" stroke-linecap="round" stroke-linejoin="round"/>
<path d="M175.8 439.5 L192.5 439.5 L192.5 423.3 L201.5 423.3 L201.5 448.5 L175.8 448.5 Z" fill="url(#gStudyS)" stroke="#101830" stroke-width="1.2"/>
<path d="M172.2 480.0 C171.7 477.2 167.9 475.2 167.9 471.8 A7.6 7.6 0 1 1 183.1 471.8 C183.1 475.2 179.3 477.2 178.8 480.0 Z" fill="url(#gBulbY)" stroke="#6a5a30" stroke-width="1.2"/><rect x="172.2" y="480.0" width="6.6" height="5" fill="#f4f4f4" stroke="#333" stroke-width="1"/><path d="M172.5 485.0 L178.5 485.0 L177.3 488.0 L173.7 488.0 Z" fill="#111"/><ellipse cx="172.5" cy="469.0" rx="2.2" ry="1.8" fill="#ffffff" opacity="0.75"/>
<g fill="none" stroke="#505050" stroke-width="1.1"><ellipse cx="218.3" cy="476" rx="12.5" ry="5.6"/><ellipse cx="218.3" cy="476" rx="4.4" ry="12" transform="rotate(-25 218.3 476)"/></g>
<circle cx="218.3" cy="476" r="2.8" fill="#d8d8de" stroke="#505050" stroke-width="1"/><circle cx="213.3" cy="464.7" r="2" fill="#e8e8ee" stroke="#505050" stroke-width="0.9"/><circle cx="207.3" cy="473.6" r="2" fill="#e8e8ee" stroke="#505050" stroke-width="0.9"/>
<path d="M172.2 521.4 C171.7 518.6 167.9 516.6 167.9 513.2 A7.6 7.6 0 1 1 183.1 513.2 C183.1 516.6 179.3 518.6 178.8 521.4 Z" fill="url(#gBulbY)" stroke="#6a5a30" stroke-width="1.2"/><rect x="172.2" y="521.4" width="6.6" height="5" fill="#f4f4f4" stroke="#333" stroke-width="1"/><path d="M172.5 526.4 L178.5 526.4 L177.3 529.4 L173.7 529.4 Z" fill="#111"/><ellipse cx="172.5" cy="510.4" rx="2.2" ry="1.8" fill="#ffffff" opacity="0.75"/>
<rect x="205.5" y="505.8" width="24.8" height="24.8" fill="url(#gWinBody)" stroke="#333" stroke-width="1.1"/><rect x="206" y="506.3" width="23.8" height="3.4" fill="#8a8a94"/>
<path d="M210 520.5 L226 520.5 M218 512 L218 519 M215.5 516.5 L218 519.5 L220.5 516.5 M214.5 526 L218 521.5 L221.5 526 Z" fill="none" stroke="#4a5a80" stroke-width="1.2"/>
<circle cx="400.9" cy="517.4" r="10.5" fill="url(#gRad517)" stroke="#4a4a4a" stroke-width="1.2"/><circle cx="400.9" cy="517.4" r="3.4" fill="#2a2a2a"/>
<rect x="162.5" y="554.8" width="13" height="9" fill="#f4f4f8"/><rect x="175.5" y="554.8" width="13.6" height="9" fill="#8eb0e4"/><rect x="162.5" y="554.8" width="26.6" height="9" fill="none" stroke="#3a4870" stroke-width="1.1"/>
<path d="M172.2 604.3 C171.7 601.5 167.9 599.5 167.9 596.1 A7.6 7.6 0 1 1 183.1 596.1 C183.1 599.5 179.3 601.5 178.8 604.3 Z" fill="url(#gBulbB)" stroke="#4a5a70" stroke-width="1.2"/><rect x="172.2" y="604.3" width="6.6" height="5" fill="#f4f4f4" stroke="#333" stroke-width="1"/><path d="M172.5 609.3 L178.5 609.3 L177.3 612.3 L173.7 612.3 Z" fill="#111"/><ellipse cx="172.5" cy="593.3" rx="2.2" ry="1.8" fill="#ffffff" opacity="0.75"/>
<path d="M206.3 588.3 L217.2 588.3 L217.2 601 L231.2 601 L231.2 612.8 L206.3 612.8 Z" fill="#98bce8" stroke="#3a5a90" stroke-width="1.2" stroke-linejoin="round"/>
<path d="M206.5 600 L217 589 M210 612.5 L231 602 M217 601 L224 612.5 M206.5 594 L213 612.5" stroke="#6a90c8" stroke-width="0.7"/>
<rect x="168.5" y="628.6" width="14.4" height="25.4" rx="1" fill="url(#gResI)" stroke="#5a3a40" stroke-width="0.9"/>
<rect x="2.5" y="1058.5" width="515" height="40" fill="#d3d3d3" stroke="#8c8c8c" stroke-width="1"/>
<text transform="translate(47.47 1086.00) scale(0.8902 1)" font-size="20.64" fill="#616161" stroke="#616161" stroke-width="0.45">COMMENTS</text>
<circle cx="489.8" cy="1079.5" r="7" fill="#2e2e2e"/><rect x="484.6" y="1078.2" width="10.4" height="2.6" fill="#e8e8e8"/><rect x="488.5" y="1074.3" width="2.6" height="10.4" fill="#e8e8e8"/>
<rect x="509.5" y="1071" width="1" height="18" fill="#8a8a8a"/><rect x="512.5" y="1071" width="1" height="18" fill="#8a8a8a"/>
<rect x="845" y="1060" width="249" height="30" fill="#cbcbcb"/>
<rect x="1106" y="1060" width="107" height="30" fill="#cbcbcb"/>
<ellipse cx="864" cy="1079" rx="12.8" ry="6" fill="none" stroke="#444" stroke-width="1.1"/>
<path d="M857 1086 L857 1074 Q864 1065 871 1072 L871 1086" fill="#e8e8ec" stroke="#444" stroke-width="1.1"/>
<path d="M862 1079.5 L866 1079.5 M864 1077.5 L864 1081.5" stroke="#4a6ac8" stroke-width="1"/>
<path d="M886.5 1075 L900 1075 L893.2 1083 Z M1076.5 1075 L1090 1075 L1083.2 1083 Z M1144 1075 L1157.5 1075 L1150.7 1083 Z M1197 1075 L1210.5 1075 L1203.7 1083 Z" fill="#2a2a2a"/>
<path d="M910 1086 L910 1073 L916 1070 L916 1073 L927 1069 L927 1086" fill="#e0e0e6" stroke="#555" stroke-width="1.1"/><rect x="913" y="1076" width="11" height="10" fill="#9aa0b4" stroke="#555" stroke-width="1"/>
<path d="M954 1086 L952 1079 Q950 1075 953 1076 L956 1080 L956 1070 Q958 1068 959.5 1070 L960 1077 L961 1068 Q963 1066 964.5 1068 L964.5 1077 L966 1069 Q968 1067 969.5 1069 L969 1078 L971 1072 Q973 1070 974 1072 L972 1086 Z" fill="#f8f8f8" stroke="#444" stroke-width="1.1" stroke-linejoin="round"/>
<circle cx="1006" cy="1078" r="8" fill="#e4ecec" stroke="#444" stroke-width="1.3"/><path d="M1012 1084 L1016 1088" stroke="#333" stroke-width="3"/>
<path d="M1018 1068 L1023 1068 M1020.5 1065.5 L1020.5 1070.5 M1018 1073 L1023 1073" stroke="#333" stroke-width="1.2"/>
<circle cx="1052" cy="1079" r="8" fill="#e4ecec" stroke="#444" stroke-width="1.3"/><path d="M1058 1085 L1062 1089" stroke="#333" stroke-width="3"/>
<rect x="1042.5" y="1068.5" width="25" height="18" fill="none" stroke="#777" stroke-width="0.8" stroke-dasharray="2 1.5"/>
<rect x="1113.5" y="1067.3" width="24" height="18" fill="#9cb8e2" stroke="#555" stroke-width="1.2"/>
<rect x="1166" y="1068" width="24" height="18" fill="#c8c8d8" stroke="#555" stroke-width="1"/>
<path d="M1169.0 1068 L1169.0 1086" stroke="#f0f0f8" stroke-width="0.9"/><path d="M1172.5 1068 L1172.5 1086" stroke="#f0f0f8" stroke-width="0.9"/><path d="M1176.0 1068 L1176.0 1086" stroke="#f0f0f8" stroke-width="0.9"/><path d="M1179.5 1068 L1179.5 1086" stroke="#f0f0f8" stroke-width="0.9"/><path d="M1183.0 1068 L1183.0 1086" stroke="#f0f0f8" stroke-width="0.9"/><path d="M1186.5 1068 L1186.5 1086" stroke="#f0f0f8" stroke-width="0.9"/>
<path d="M1166 1071.0 L1190 1071.0" stroke="#f0f0f8" stroke-width="0.9"/><path d="M1166 1074.5 L1190 1074.5" stroke="#f0f0f8" stroke-width="0.9"/><path d="M1166 1078.0 L1190 1078.0" stroke="#f0f0f8" stroke-width="0.9"/><path d="M1166 1081.5 L1190 1081.5" stroke="#f0f0f8" stroke-width="0.9"/><path d="M1166 1085.0 L1190 1085.0" stroke="#f0f0f8" stroke-width="0.9"/>
<defs><linearGradient id="bTop" gradientUnits="userSpaceOnUse" x1="358.00" y1="664.20" x2="605.48" y2="164.61"><stop offset="-0.0000" stop-color="#004bf2"/><stop offset="0.0038" stop-color="#0059f5"/><stop offset="0.0077" stop-color="#0066f7"/><stop offset="0.0115" stop-color="#0074f9"/><stop offset="0.0154" stop-color="#0082fc"/><stop offset="0.0192" stop-color="#0090fe"/><stop offset="0.0231" stop-color="#009cfe"/><stop offset="0.0269" stop-color="#00a1fd"/><stop offset="0.0308" stop-color="#00a7fc"/><stop offset="0.0346" stop-color="#00acfb"/><stop offset="0.0385" stop-color="#00b2fa"/><stop offset="0.0423" stop-color="#00b7fa"/><stop offset="0.0462" stop-color="#00bcf9"/><stop offset="0.0500" stop-color="#00c2f8"/><stop offset="0.0539" stop-color="#00c7f7"/><stop offset="0.0578" stop-color="#00cdf6"/><stop offset="0.0616" stop-color="#00d2f5"/><stop offset="0.0655" stop-color="#00d5f5"/><stop offset="0.0694" stop-color="#00d7f4"/><stop offset="0.0733" stop-color="#00daf4"/><stop offset="0.0772" stop-color="#00dcf3"/><stop offset="0.0811" stop-color="#00dff3"/><stop offset="0.0850" stop-color="#00e1f2"/><stop offset="0.0889" stop-color="#00e4f2"/><stop offset="0.0928" stop-color="#00e4f1"/><stop offset="0.0967" stop-color="#00e4f0"/><stop offset="0.1006" stop-color="#00e4ee"/><stop offset="0.1045" stop-color="#00e4ed"/><stop offset="0.1084" stop-color="#00e4ec"/><stop offset="0.1124" stop-color="#00e4eb"/><stop offset="0.1163" stop-color="#00e4ea"/><stop offset="0.1203" stop-color="#00e5e4"/><stop offset="0.1242" stop-color="#00e5de"/><stop offset="0.1282" stop-color="#00e5d9"/><stop offset="0.1322" stop-color="#00e5d3"/><stop offset="0.1362" stop-color="#00e6ce"/><stop offset="0.1401" stop-color="#00e6c8"/><stop offset="0.1441" stop-color="#00e6a8"/><stop offset="0.1481" stop-color="#00e688"/><stop offset="0.1522" stop-color="#00e668"/><stop offset="0.1562" stop-color="#00e648"/><stop offset="0.1602" stop-color="#00e628"/><stop offset="0.1643" stop-color="#0fe622"/><stop offset="0.1683" stop-color="#1ee71d"/><stop offset="0.1724" stop-color="#2ce717"/><stop offset="0.1764" stop-color="#3be712"/><stop offset="0.1805" stop-color="#4ae80c"/><stop offset="0.1846" stop-color="#56e80a"/><stop offset="0.1887" stop-color="#5fe809"/><stop offset="0.1928" stop-color="#69e808"/><stop offset="0.1970" stop-color="#72e808"/><stop offset="0.2011" stop-color="#7be907"/><stop offset="0.2052" stop-color="#84e907"/><stop offset="0.2094" stop-color="#8ee906"/><stop offset="0.2136" stop-color="#97e906"/><stop offset="0.2178" stop-color="#a0e905"/><stop offset="0.2220" stop-color="#a9e905"/><stop offset="0.2262" stop-color="#b2e904"/><stop offset="0.2304" stop-color="#bbe903"/><stop offset="0.2346" stop-color="#c4e903"/><stop offset="0.2389" stop-color="#cdea02"/><stop offset="0.2432" stop-color="#d7ea02"/><stop offset="0.2474" stop-color="#e0ea01"/><stop offset="0.2517" stop-color="#e9ea01"/><stop offset="0.2560" stop-color="#f2ea00"/><stop offset="0.2604" stop-color="#f3e600"/><stop offset="0.2647" stop-color="#f3e100"/><stop offset="0.2691" stop-color="#f4dd00"/><stop offset="0.2734" stop-color="#f5d800"/><stop offset="0.2778" stop-color="#f5d400"/><stop offset="0.2822" stop-color="#f6cf00"/><stop offset="0.2866" stop-color="#f7cb00"/><stop offset="0.2911" stop-color="#f7c700"/><stop offset="0.2955" stop-color="#f8c200"/><stop offset="0.3000" stop-color="#f9be00"/><stop offset="0.3045" stop-color="#fab900"/><stop offset="0.3090" stop-color="#fab500"/><stop offset="0.3135" stop-color="#fbb100"/><stop offset="0.3180" stop-color="#fcac00"/><stop offset="0.3226" stop-color="#fca800"/><stop offset="0.3272" stop-color="#fda300"/><stop offset="0.3318" stop-color="#fe9f00"/><stop offset="0.3364" stop-color="#fe9a00"/><stop offset="0.3410" stop-color="#ff9600"/><stop offset="0.3457" stop-color="#ff8e00"/><stop offset="0.3503" stop-color="#ff8600"/><stop offset="0.3550" stop-color="#ff7f00"/><stop offset="0.3597" stop-color="#ff7700"/><stop offset="0.3645" stop-color="#ff6f00"/><stop offset="0.3692" stop-color="#ff6700"/><stop offset="0.3740" stop-color="#ff6000"/><stop offset="0.3788" stop-color="#ff5800"/><stop offset="0.3836" stop-color="#ff5000"/><stop offset="0.3884" stop-color="#ff4a00"/><stop offset="0.3933" stop-color="#ff4400"/><stop offset="0.3981" stop-color="#ff3d00"/><stop offset="0.4030" stop-color="#ff3700"/><stop offset="0.4080" stop-color="#ff3100"/><stop offset="0.4129" stop-color="#ff2b00"/><stop offset="0.4179" stop-color="#ff2400"/><stop offset="0.4229" stop-color="#ff1e00"/><stop offset="0.4279" stop-color="#ff2200"/><stop offset="0.4329" stop-color="#ff2600"/><stop offset="0.4380" stop-color="#ff2900"/><stop offset="0.4430" stop-color="#ff2d00"/><stop offset="0.4481" stop-color="#ff3100"/><stop offset="0.4533" stop-color="#ff3500"/><stop offset="0.4584" stop-color="#ff3800"/><stop offset="0.4636" stop-color="#ff3c00"/><stop offset="0.4688" stop-color="#ff4100"/><stop offset="0.4740" stop-color="#ff4600"/><stop offset="0.4792" stop-color="#ff4b00"/><stop offset="0.4845" stop-color="#ff5000"/><stop offset="0.4897" stop-color="#ff5500"/><stop offset="0.4950" stop-color="#ff5a00"/><stop offset="0.5003" stop-color="#ff5f00"/><stop offset="0.5057" stop-color="#ff6400"/><stop offset="0.5110" stop-color="#ff6900"/><stop offset="0.5164" stop-color="#ff6e00"/><stop offset="0.5218" stop-color="#ff7500"/><stop offset="0.5272" stop-color="#ff7c00"/><stop offset="0.5326" stop-color="#ff8300"/><stop offset="0.5380" stop-color="#ff8b00"/><stop offset="0.5435" stop-color="#ff9200"/><stop offset="0.5490" stop-color="#ff9800"/><stop offset="0.5545" stop-color="#fe9c00"/><stop offset="0.5600" stop-color="#fda100"/><stop offset="0.5655" stop-color="#fda600"/><stop offset="0.5711" stop-color="#fcaa00"/><stop offset="0.5766" stop-color="#fbaf00"/><stop offset="0.5822" stop-color="#fab400"/><stop offset="0.5878" stop-color="#fab800"/><stop offset="0.5934" stop-color="#f9bd00"/><stop offset="0.5991" stop-color="#f9c000"/><stop offset="0.6047" stop-color="#f8c300"/><stop offset="0.6104" stop-color="#f8c500"/><stop offset="0.6160" stop-color="#f7c800"/><stop offset="0.6217" stop-color="#f7cb00"/><stop offset="0.6274" stop-color="#f6ce00"/><stop offset="0.6332" stop-color="#f6d100"/><stop offset="0.6389" stop-color="#f5d400"/><stop offset="0.6446" stop-color="#f5d700"/><stop offset="0.6504" stop-color="#f5da00"/><stop offset="0.6562" stop-color="#f4dd00"/><stop offset="0.6620" stop-color="#f4e000"/><stop offset="0.6678" stop-color="#f3e200"/><stop offset="0.6736" stop-color="#f3e500"/><stop offset="0.6794" stop-color="#f2e800"/><stop offset="0.6852" stop-color="#ecea00"/><stop offset="0.6911" stop-color="#deea01"/><stop offset="0.6970" stop-color="#d0ea02"/><stop offset="0.7028" stop-color="#c2e903"/><stop offset="0.7087" stop-color="#b3e904"/><stop offset="0.7146" stop-color="#a5e905"/><stop offset="0.7205" stop-color="#97e906"/><stop offset="0.7264" stop-color="#89e906"/><stop offset="0.7324" stop-color="#7be907"/><stop offset="0.7383" stop-color="#6ce808"/><stop offset="0.7443" stop-color="#5ee809"/><stop offset="0.7502" stop-color="#50e80a"/><stop offset="0.7562" stop-color="#3ae712"/><stop offset="0.7622" stop-color="#24e71b"/><stop offset="0.7681" stop-color="#0de623"/><stop offset="0.7741" stop-color="#00e632"/><stop offset="0.7801" stop-color="#00e64b"/><stop offset="0.7862" stop-color="#00e665"/><stop offset="0.7922" stop-color="#00e67e"/><stop offset="0.7982" stop-color="#00e697"/><stop offset="0.8042" stop-color="#00e6b0"/><stop offset="0.8103" stop-color="#00e6c8"/><stop offset="0.8163" stop-color="#00e6cd"/><stop offset="0.8224" stop-color="#00e6d1"/><stop offset="0.8284" stop-color="#00e5d6"/><stop offset="0.8345" stop-color="#00e5da"/><stop offset="0.8406" stop-color="#00e5de"/><stop offset="0.8467" stop-color="#00e5e1"/><stop offset="0.8528" stop-color="#00e5e4"/><stop offset="0.8589" stop-color="#00e5e7"/><stop offset="0.8650" stop-color="#00e4ea"/><stop offset="0.8711" stop-color="#00e4ec"/><stop offset="0.8772" stop-color="#00e4ef"/><stop offset="0.8833" stop-color="#00e4f1"/><stop offset="0.8894" stop-color="#00e2f2"/><stop offset="0.8955" stop-color="#00def3"/><stop offset="0.9016" stop-color="#00dbf4"/><stop offset="0.9078" stop-color="#00d7f4"/><stop offset="0.9139" stop-color="#00d3f5"/><stop offset="0.9200" stop-color="#00cff6"/><stop offset="0.9262" stop-color="#00cbf6"/><stop offset="0.9323" stop-color="#00c7f7"/><stop offset="0.9385" stop-color="#00c3f7"/><stop offset="0.9446" stop-color="#00c0f8"/><stop offset="0.9508" stop-color="#00bcf9"/><stop offset="0.9569" stop-color="#00b8f9"/><stop offset="0.9631" stop-color="#00b4fa"/><stop offset="0.9692" stop-color="#00a7fc"/><stop offset="0.9754" stop-color="#009afe"/><stop offset="0.9815" stop-color="#008bfd"/><stop offset="0.9877" stop-color="#007bfa"/><stop offset="0.9938" stop-color="#006af8"/><stop offset="1.0000" stop-color="#005af5"/></linearGradient><linearGradient id="bFront" gradientUnits="userSpaceOnUse" x1="473.60" y1="0" x2="1300.20" y2="0"><stop offset="0.0000" stop-color="#003cf0"/><stop offset="0.0050" stop-color="#0045f2"/><stop offset="0.0100" stop-color="#004ef3"/><stop offset="0.0150" stop-color="#0057f4"/><stop offset="0.0200" stop-color="#0060f6"/><stop offset="0.0250" stop-color="#0069f8"/><stop offset="0.0300" stop-color="#0072f9"/><stop offset="0.0350" stop-color="#007bfa"/><stop offset="0.0400" stop-color="#0084fc"/><stop offset="0.0450" stop-color="#008dfe"/><stop offset="0.0500" stop-color="#0096ff"/><stop offset="0.0550" stop-color="#009dfe"/><stop offset="0.0600" stop-color="#00a3fd"/><stop offset="0.0650" stop-color="#00aafc"/><stop offset="0.0700" stop-color="#00b1fb"/><stop offset="0.0750" stop-color="#00b8f9"/><stop offset="0.0800" stop-color="#00bef8"/><stop offset="0.0850" stop-color="#00c5f7"/><stop offset="0.0900" stop-color="#00ccf6"/><stop offset="0.0950" stop-color="#00d3f5"/><stop offset="0.1000" stop-color="#00d9f4"/><stop offset="0.1050" stop-color="#00e0f3"/><stop offset="0.1100" stop-color="#00e4f0"/><stop offset="0.1150" stop-color="#00e4ec"/><stop offset="0.1200" stop-color="#00e4e8"/><stop offset="0.1250" stop-color="#00e5e4"/><stop offset="0.1300" stop-color="#00e5e0"/><stop offset="0.1350" stop-color="#00e5dc"/><stop offset="0.1400" stop-color="#00e5d8"/><stop offset="0.1450" stop-color="#00e5d4"/><stop offset="0.1500" stop-color="#00e6d0"/><stop offset="0.1550" stop-color="#00e6cc"/><stop offset="0.1600" stop-color="#00e6c8"/><stop offset="0.1650" stop-color="#00e6ad"/><stop offset="0.1700" stop-color="#00e693"/><stop offset="0.1750" stop-color="#00e678"/><stop offset="0.1800" stop-color="#00e65d"/><stop offset="0.1850" stop-color="#00e643"/><stop offset="0.1900" stop-color="#00e628"/><stop offset="0.1950" stop-color="#11e622"/><stop offset="0.2000" stop-color="#21e71c"/><stop offset="0.2050" stop-color="#32e715"/><stop offset="0.2100" stop-color="#43e80f"/><stop offset="0.2150" stop-color="#52e80a"/><stop offset="0.2200" stop-color="#5de809"/><stop offset="0.2250" stop-color="#67e809"/><stop offset="0.2300" stop-color="#72e808"/><stop offset="0.2350" stop-color="#7be907"/><stop offset="0.2400" stop-color="#84e907"/><stop offset="0.2450" stop-color="#8ee906"/><stop offset="0.2500" stop-color="#97e906"/><stop offset="0.2550" stop-color="#a0e905"/><stop offset="0.2600" stop-color="#a9e905"/><stop offset="0.2650" stop-color="#b2e904"/><stop offset="0.2700" stop-color="#bbe903"/><stop offset="0.2750" stop-color="#c4e903"/><stop offset="0.2800" stop-color="#cdea02"/><stop offset="0.2850" stop-color="#d7ea02"/><stop offset="0.2900" stop-color="#e0ea01"/><stop offset="0.2950" stop-color="#e9ea01"/><stop offset="0.3000" stop-color="#f2ea00"/><stop offset="0.3050" stop-color="#f3e600"/><stop offset="0.3100" stop-color="#f3e100"/><stop offset="0.3150" stop-color="#f4dd00"/><stop offset="0.3200" stop-color="#f5d800"/><stop offset="0.3250" stop-color="#f5d400"/><stop offset="0.3300" stop-color="#f6cf00"/><stop offset="0.3350" stop-color="#f7cb00"/><stop offset="0.3400" stop-color="#f8c600"/><stop offset="0.3450" stop-color="#f8c200"/><stop offset="0.3500" stop-color="#f9bd00"/><stop offset="0.3550" stop-color="#fab900"/><stop offset="0.3600" stop-color="#fab400"/><stop offset="0.3650" stop-color="#fbb000"/><stop offset="0.3700" stop-color="#fcab00"/><stop offset="0.3750" stop-color="#fca700"/><stop offset="0.3800" stop-color="#fda300"/><stop offset="0.3850" stop-color="#fe9e00"/><stop offset="0.3900" stop-color="#fe9a00"/><stop offset="0.3950" stop-color="#ff9400"/><stop offset="0.4000" stop-color="#ff8c00"/><stop offset="0.4050" stop-color="#ff8400"/><stop offset="0.4100" stop-color="#ff7c00"/><stop offset="0.4150" stop-color="#ff7400"/><stop offset="0.4200" stop-color="#ff6c00"/><stop offset="0.4250" stop-color="#ff6400"/><stop offset="0.4300" stop-color="#ff5c00"/><stop offset="0.4350" stop-color="#ff5400"/><stop offset="0.4400" stop-color="#ff4c00"/><stop offset="0.4450" stop-color="#ff4400"/><stop offset="0.4500" stop-color="#ff3c00"/><stop offset="0.4550" stop-color="#ff3900"/><stop offset="0.4600" stop-color="#ff3600"/><stop offset="0.4650" stop-color="#ff3300"/><stop offset="0.4700" stop-color="#ff3000"/><stop offset="0.4750" stop-color="#ff2d00"/><stop offset="0.4800" stop-color="#ff2a00"/><stop offset="0.4850" stop-color="#ff2700"/><stop offset="0.4900" stop-color="#ff2400"/><stop offset="0.4950" stop-color="#ff2100"/><stop offset="0.5000" stop-color="#ff1e00"/><stop offset="0.5050" stop-color="#ff2100"/><stop offset="0.5100" stop-color="#ff2400"/><stop offset="0.5150" stop-color="#ff2700"/><stop offset="0.5200" stop-color="#ff2a00"/><stop offset="0.5250" stop-color="#ff2d00"/><stop offset="0.5300" stop-color="#ff3000"/><stop offset="0.5350" stop-color="#ff3300"/><stop offset="0.5400" stop-color="#ff3600"/><stop offset="0.5450" stop-color="#ff3900"/><stop offset="0.5500" stop-color="#ff3c00"/><stop offset="0.5550" stop-color="#ff4400"/><stop offset="0.5600" stop-color="#ff4c00"/><stop offset="0.5650" stop-color="#ff5400"/><stop offset="0.5700" stop-color="#ff5c00"/><stop offset="0.5750" stop-color="#ff6400"/><stop offset="0.5800" stop-color="#ff6c00"/><stop offset="0.5850" stop-color="#ff7400"/><stop offset="0.5900" stop-color="#ff7c00"/><stop offset="0.5950" stop-color="#ff8400"/><stop offset="0.6000" stop-color="#ff8c00"/><stop offset="0.6050" stop-color="#ff9400"/><stop offset="0.6100" stop-color="#fe9a00"/><stop offset="0.6150" stop-color="#fe9e00"/><stop offset="0.6200" stop-color="#fda300"/><stop offset="0.6250" stop-color="#fca700"/><stop offset="0.6300" stop-color="#fcab00"/><stop offset="0.6350" stop-color="#fbb000"/><stop offset="0.6400" stop-color="#fab400"/><stop offset="0.6450" stop-color="#fab900"/><stop offset="0.6500" stop-color="#f9bd00"/><stop offset="0.6550" stop-color="#f8c200"/><stop offset="0.6600" stop-color="#f8c600"/><stop offset="0.6650" stop-color="#f7cb00"/><stop offset="0.6700" stop-color="#f6cf00"/><stop offset="0.6750" stop-color="#f5d400"/><stop offset="0.6800" stop-color="#f5d800"/><stop offset="0.6850" stop-color="#f4dd00"/><stop offset="0.6900" stop-color="#f3e100"/><stop offset="0.6950" stop-color="#f3e600"/><stop offset="0.7000" stop-color="#f2ea00"/><stop offset="0.7050" stop-color="#e9ea01"/><stop offset="0.7100" stop-color="#e0ea01"/><stop offset="0.7150" stop-color="#d7ea02"/><stop offset="0.7200" stop-color="#cdea02"/><stop offset="0.7250" stop-color="#c4e903"/><stop offset="0.7300" stop-color="#bbe903"/><stop offset="0.7350" stop-color="#b2e904"/><stop offset="0.7400" stop-color="#a9e905"/><stop offset="0.7450" stop-color="#a0e905"/><stop offset="0.7500" stop-color="#97e906"/><stop offset="0.7550" stop-color="#8ee906"/><stop offset="0.7600" stop-color="#84e907"/><stop offset="0.7650" stop-color="#7be907"/><stop offset="0.7700" stop-color="#72e808"/><stop offset="0.7750" stop-color="#67e809"/><stop offset="0.7800" stop-color="#5de809"/><stop offset="0.7850" stop-color="#52e80a"/><stop offset="0.7900" stop-color="#43e80f"/><stop offset="0.7950" stop-color="#32e715"/><stop offset="0.8000" stop-color="#21e71c"/><stop offset="0.8050" stop-color="#11e622"/><stop offset="0.8100" stop-color="#00e628"/><stop offset="0.8150" stop-color="#00e643"/><stop offset="0.8200" stop-color="#00e65d"/><stop offset="0.8250" stop-color="#00e678"/><stop offset="0.8300" stop-color="#00e693"/><stop offset="0.8350" stop-color="#00e6ad"/><stop offset="0.8400" stop-color="#00e6c8"/><stop offset="0.8450" stop-color="#00e6cc"/><stop offset="0.8500" stop-color="#00e6d0"/><stop offset="0.8550" stop-color="#00e5d4"/><stop offset="0.8600" stop-color="#00e5d8"/><stop offset="0.8650" stop-color="#00e5dc"/><stop offset="0.8700" stop-color="#00e5e0"/><stop offset="0.8750" stop-color="#00e5e4"/><stop offset="0.8800" stop-color="#00e4e8"/><stop offset="0.8850" stop-color="#00e4ec"/><stop offset="0.8900" stop-color="#00e4f0"/><stop offset="0.8950" stop-color="#00e0f3"/><stop offset="0.9000" stop-color="#00d9f4"/><stop offset="0.9050" stop-color="#00d3f5"/><stop offset="0.9100" stop-color="#00ccf6"/><stop offset="0.9150" stop-color="#00c5f7"/><stop offset="0.9200" stop-color="#00bef8"/><stop offset="0.9250" stop-color="#00b8f9"/><stop offset="0.9300" stop-color="#00b1fb"/><stop offset="0.9350" stop-color="#00aafc"/><stop offset="0.9400" stop-color="#00a3fd"/><stop offset="0.9450" stop-color="#009dfe"/><stop offset="0.9500" stop-color="#0096ff"/><stop offset="0.9550" stop-color="#008dfe"/><stop offset="0.9600" stop-color="#0084fc"/><stop offset="0.9650" stop-color="#007bfa"/><stop offset="0.9700" stop-color="#0072f9"/><stop offset="0.9750" stop-color="#0069f8"/><stop offset="0.9800" stop-color="#0060f6"/><stop offset="0.9850" stop-color="#0057f4"/><stop offset="0.9900" stop-color="#004ef3"/><stop offset="0.9950" stop-color="#0045f2"/><stop offset="1.0000" stop-color="#003cf0"/></linearGradient><linearGradient id="bEnd" gradientUnits="userSpaceOnUse" x1="416" y1="692" x2="392" y2="742"><stop offset="0" stop-color="#0020c8"/><stop offset="0.45" stop-color="#0060e8"/><stop offset="1" stop-color="#0090f8"/></linearGradient><radialGradient id="shL" gradientUnits="userSpaceOnUse" cx="474" cy="722" r="42"><stop offset="0" stop-color="#000060" stop-opacity="0.45"/><stop offset="1" stop-color="#000060" stop-opacity="0"/></radialGradient><linearGradient id="shTopL" gradientUnits="userSpaceOnUse" x1="416" y1="692" x2="436.7" y2="648.7"><stop offset="0" stop-color="#0030f0" stop-opacity="0.75"/><stop offset="0.5" stop-color="#0040f8" stop-opacity="0.35"/><stop offset="1" stop-color="#0040ff" stop-opacity="0"/></linearGradient><linearGradient id="shTopR" gradientUnits="userSpaceOnUse" x1="1240" y1="478" x2="1222.6" y2="514.0"><stop offset="0" stop-color="#0000b0" stop-opacity="0.6"/><stop offset="0.4" stop-color="#0000b0" stop-opacity="0.22"/><stop offset="1" stop-color="#0000b0" stop-opacity="0"/></linearGradient><radialGradient id="shFrontR" gradientUnits="userSpaceOnUse" cx="1298" cy="508" r="50"><stop offset="0" stop-color="#0000a0" stop-opacity="0.35"/><stop offset="1" stop-color="#0000a0" stop-opacity="0"/></radialGradient></defs>
<path d="M358.00 664.20 L366.25 663.50 L374.50 662.81 L382.75 662.11 L391.00 661.41 L399.25 660.70 L407.50 659.99 L415.75 659.27 L424.00 658.54 L432.25 657.81 L440.50 657.06 L448.75 656.30 L457.00 655.53 L465.25 654.74 L473.50 653.94 L481.75 653.13 L490.00 652.29 L498.25 651.44 L506.50 650.57 L514.75 649.68 L523.00 648.76 L531.25 647.83 L539.50 646.87 L547.75 645.88 L556.00 644.87 L564.25 643.83 L572.50 642.76 L580.75 641.66 L589.00 640.53 L597.25 639.36 L605.50 638.17 L613.75 636.94 L622.00 635.67 L630.25 634.37 L638.50 633.02 L646.75 631.64 L655.00 630.22 L663.25 628.76 L671.50 627.25 L679.75 625.71 L688.00 624.11 L696.25 622.47 L704.50 620.79 L712.75 619.05 L721.00 617.26 L729.25 615.43 L737.50 613.54 L745.75 611.60 L754.00 609.61 L762.25 607.56 L770.50 605.45 L778.75 603.29 L787.00 601.07 L795.25 598.79 L803.50 596.46 L811.75 594.08 L820.00 591.64 L828.25 589.16 L836.50 586.63 L844.75 584.04 L853.00 581.41 L861.25 578.74 L869.50 576.01 L877.75 573.25 L886.00 570.44 L894.25 567.59 L902.50 564.70 L910.75 561.78 L919.00 558.81 L927.25 555.81 L935.50 552.77 L943.75 549.69 L952.00 546.59 L960.25 543.45 L968.50 540.28 L976.75 537.08 L985.00 533.85 L993.25 530.59 L1001.50 527.31 L1009.75 524.00 L1018.00 520.66 L1026.25 517.31 L1034.50 513.93 L1042.75 510.53 L1051.00 507.11 L1059.25 503.68 L1067.50 500.22 L1075.75 496.75 L1084.00 493.27 L1092.25 489.77 L1100.50 486.26 L1108.75 482.74 L1117.00 479.20 L1125.25 475.66 L1133.50 472.11 L1141.75 468.55 L1150.00 464.99 L1158.25 461.42 L1166.50 457.85 L1174.75 454.27 L1183.00 450.70 L1296.00 505.30 L1287.78 508.88 L1279.57 512.47 L1271.35 516.05 L1263.14 519.62 L1254.92 523.20 L1246.70 526.76 L1238.49 530.32 L1230.27 533.87 L1222.06 537.42 L1213.84 540.95 L1205.62 544.47 L1197.41 547.98 L1189.19 551.47 L1180.98 554.95 L1172.76 558.41 L1164.54 561.86 L1156.33 565.28 L1148.11 568.69 L1139.90 572.08 L1131.68 575.44 L1123.46 578.79 L1115.25 582.10 L1107.03 585.40 L1098.82 588.66 L1090.60 591.90 L1082.38 595.11 L1074.17 598.29 L1065.95 601.44 L1057.74 604.55 L1049.52 607.64 L1041.30 610.68 L1033.09 613.70 L1024.87 616.67 L1016.66 619.61 L1008.44 622.51 L1000.22 625.37 L992.01 628.18 L983.79 630.96 L975.58 633.69 L967.36 636.37 L959.14 639.01 L950.93 641.60 L942.71 644.15 L934.50 646.64 L926.28 649.08 L918.06 651.48 L909.85 653.81 L901.63 656.10 L893.42 658.33 L885.20 660.50 L876.98 662.62 L868.77 664.67 L860.55 666.68 L852.34 668.63 L844.12 670.52 L835.90 672.37 L827.69 674.16 L819.47 675.91 L811.26 677.60 L803.04 679.25 L794.82 680.85 L786.61 682.41 L778.39 683.93 L770.18 685.40 L761.96 686.83 L753.74 688.22 L745.53 689.57 L737.31 690.88 L729.10 692.16 L720.88 693.40 L712.66 694.60 L704.45 695.77 L696.23 696.91 L688.02 698.02 L679.80 699.10 L671.58 700.15 L663.37 701.17 L655.15 702.17 L646.94 703.14 L638.72 704.08 L630.50 705.01 L622.29 705.91 L614.07 706.79 L605.86 707.65 L597.64 708.49 L589.42 709.32 L581.21 710.13 L572.99 710.92 L564.78 711.70 L556.56 712.47 L548.34 713.22 L540.13 713.97 L531.91 714.71 L523.70 715.43 L515.48 716.16 L507.26 716.87 L499.05 717.58 L490.83 718.29 L482.62 719.00 L474.40 719.70 Z" fill="url(#bTop)"/>
<path d="M474.40 719.70 L482.62 719.00 L490.83 718.29 L499.05 717.58 L507.26 716.87 L515.48 716.16 L523.70 715.43 L531.91 714.71 L540.13 713.97 L548.34 713.22 L556.56 712.47 L564.78 711.70 L572.99 710.92 L581.21 710.13 L589.42 709.32 L597.64 708.49 L605.86 707.65 L614.07 706.79 L622.29 705.91 L630.50 705.01 L638.72 704.08 L646.94 703.14 L655.15 702.17 L663.37 701.17 L671.58 700.15 L679.80 699.10 L688.02 698.02 L696.23 696.91 L704.45 695.77 L712.66 694.60 L720.88 693.40 L729.10 692.16 L737.31 690.88 L745.53 689.57 L753.74 688.22 L761.96 686.83 L770.18 685.40 L778.39 683.93 L786.61 682.41 L794.82 680.85 L803.04 679.25 L811.26 677.60 L819.47 675.91 L827.69 674.16 L835.90 672.37 L844.12 670.52 L852.34 668.63 L860.55 666.68 L868.77 664.67 L876.98 662.62 L885.20 660.50 L893.42 658.33 L901.63 656.10 L909.85 653.81 L918.06 651.48 L926.28 649.08 L934.50 646.64 L942.71 644.15 L950.93 641.60 L959.14 639.01 L967.36 636.37 L975.58 633.69 L983.79 630.96 L992.01 628.18 L1000.22 625.37 L1008.44 622.51 L1016.66 619.61 L1024.87 616.67 L1033.09 613.70 L1041.30 610.68 L1049.52 607.64 L1057.74 604.55 L1065.95 601.44 L1074.17 598.29 L1082.38 595.11 L1090.60 591.90 L1098.82 588.66 L1107.03 585.40 L1115.25 582.10 L1123.46 578.79 L1131.68 575.44 L1139.90 572.08 L1148.11 568.69 L1156.33 565.28 L1164.54 561.86 L1172.76 558.41 L1180.98 554.95 L1189.19 551.47 L1197.41 547.98 L1205.62 544.47 L1213.84 540.95 L1222.06 537.42 L1230.27 533.87 L1238.49 530.32 L1246.70 526.76 L1254.92 523.20 L1263.14 519.62 L1271.35 516.05 L1279.57 512.47 L1287.78 508.88 L1296.00 505.30 L1304.40 552.20 L1296.08 555.80 L1287.77 559.39 L1279.45 562.99 L1271.14 566.58 L1262.82 570.17 L1254.50 573.75 L1246.19 577.32 L1237.87 580.89 L1229.56 584.44 L1221.24 587.99 L1212.92 591.52 L1204.61 595.04 L1196.29 598.55 L1187.98 602.05 L1179.66 605.52 L1171.34 608.98 L1163.03 612.42 L1154.71 615.84 L1146.40 619.25 L1138.08 622.62 L1129.76 625.98 L1121.45 629.31 L1113.13 632.62 L1104.82 635.90 L1096.50 639.15 L1088.18 642.37 L1079.87 645.57 L1071.55 648.73 L1063.24 651.86 L1054.92 654.96 L1046.60 658.02 L1038.29 661.04 L1029.97 664.03 L1021.66 666.99 L1013.34 669.90 L1005.02 672.77 L996.71 675.60 L988.39 678.39 L980.08 681.13 L971.76 683.83 L963.44 686.49 L955.13 689.09 L946.81 691.65 L938.50 694.16 L930.18 696.61 L921.86 699.02 L913.55 701.37 L905.23 703.67 L896.92 705.91 L888.60 708.10 L880.28 710.23 L871.97 712.30 L863.65 714.32 L855.34 716.28 L847.02 718.19 L838.70 720.05 L830.39 721.86 L822.07 723.62 L813.76 725.33 L805.44 726.99 L797.12 728.61 L788.81 730.18 L780.49 731.71 L772.18 733.19 L763.86 734.64 L755.54 736.04 L747.23 737.41 L738.91 738.73 L730.60 740.02 L722.28 741.28 L713.96 742.50 L705.65 743.68 L697.33 744.83 L689.02 745.96 L680.70 747.05 L672.38 748.11 L664.07 749.15 L655.75 750.16 L647.44 751.14 L639.12 752.10 L630.80 753.04 L622.49 753.96 L614.17 754.85 L605.86 755.73 L597.54 756.58 L589.22 757.42 L580.91 758.24 L572.59 759.05 L564.28 759.85 L555.96 760.63 L547.64 761.40 L539.33 762.16 L531.01 762.91 L522.70 763.65 L514.38 764.39 L506.06 765.12 L497.75 765.84 L489.43 766.56 L481.12 767.28 L472.80 768.00 Z" fill="url(#bFront)"/>
<path d="M358.00 664.20 L366.25 663.50 L374.50 662.81 L382.75 662.11 L391.00 661.41 L399.25 660.70 L407.50 659.99 L415.75 659.27 L424.00 658.54 L432.25 657.81 L440.50 657.06 L448.75 656.30 L457.00 655.53 L465.25 654.74 L473.50 653.94 L481.75 653.13 L490.00 652.29 L498.25 651.44 L506.50 650.57 L514.75 649.68 L523.00 648.76 L531.25 647.83 L539.50 646.87 L547.75 645.88 L556.00 644.87 L564.25 643.83 L572.50 642.76 L580.75 641.66 L589.00 640.53 L597.25 639.36 L605.50 638.17 L613.75 636.94 L622.00 635.67 L630.25 634.37 L638.50 633.02 L646.75 631.64 L655.00 630.22 L663.25 628.76 L671.50 627.25 L679.75 625.71 L688.00 624.11 L696.25 622.47 L704.50 620.79 L712.75 619.05 L721.00 617.26 L729.25 615.43 L737.50 613.54 L745.75 611.60 L754.00 609.61 L762.25 607.56 L770.50 605.45 L778.75 603.29 L787.00 601.07 L795.25 598.79 L803.50 596.46 L811.75 594.08 L820.00 591.64 L828.25 589.16 L836.50 586.63 L844.75 584.04 L853.00 581.41 L861.25 578.74 L869.50 576.01 L877.75 573.25 L886.00 570.44 L894.25 567.59 L902.50 564.70 L910.75 561.78 L919.00 558.81 L927.25 555.81 L935.50 552.77 L943.75 549.69 L952.00 546.59 L960.25 543.45 L968.50 540.28 L976.75 537.08 L985.00 533.85 L993.25 530.59 L1001.50 527.31 L1009.75 524.00 L1018.00 520.66 L1026.25 517.31 L1034.50 513.93 L1042.75 510.53 L1051.00 507.11 L1059.25 503.68 L1067.50 500.22 L1075.75 496.75 L1084.00 493.27 L1092.25 489.77 L1100.50 486.26 L1108.75 482.74 L1117.00 479.20 L1125.25 475.66 L1133.50 472.11 L1141.75 468.55 L1150.00 464.99 L1158.25 461.42 L1166.50 457.85 L1174.75 454.27 L1183.00 450.70 L1296.00 505.30 L1287.78 508.88 L1279.57 512.47 L1271.35 516.05 L1263.14 519.62 L1254.92 523.20 L1246.70 526.76 L1238.49 530.32 L1230.27 533.87 L1222.06 537.42 L1213.84 540.95 L1205.62 544.47 L1197.41 547.98 L1189.19 551.47 L1180.98 554.95 L1172.76 558.41 L1164.54 561.86 L1156.33 565.28 L1148.11 568.69 L1139.90 572.08 L1131.68 575.44 L1123.46 578.79 L1115.25 582.10 L1107.03 585.40 L1098.82 588.66 L1090.60 591.90 L1082.38 595.11 L1074.17 598.29 L1065.95 601.44 L1057.74 604.55 L1049.52 607.64 L1041.30 610.68 L1033.09 613.70 L1024.87 616.67 L1016.66 619.61 L1008.44 622.51 L1000.22 625.37 L992.01 628.18 L983.79 630.96 L975.58 633.69 L967.36 636.37 L959.14 639.01 L950.93 641.60 L942.71 644.15 L934.50 646.64 L926.28 649.08 L918.06 651.48 L909.85 653.81 L901.63 656.10 L893.42 658.33 L885.20 660.50 L876.98 662.62 L868.77 664.67 L860.55 666.68 L852.34 668.63 L844.12 670.52 L835.90 672.37 L827.69 674.16 L819.47 675.91 L811.26 677.60 L803.04 679.25 L794.82 680.85 L786.61 682.41 L778.39 683.93 L770.18 685.40 L761.96 686.83 L753.74 688.22 L745.53 689.57 L737.31 690.88 L729.10 692.16 L720.88 693.40 L712.66 694.60 L704.45 695.77 L696.23 696.91 L688.02 698.02 L679.80 699.10 L671.58 700.15 L663.37 701.17 L655.15 702.17 L646.94 703.14 L638.72 704.08 L630.50 705.01 L622.29 705.91 L614.07 706.79 L605.86 707.65 L597.64 708.49 L589.42 709.32 L581.21 710.13 L572.99 710.92 L564.78 711.70 L556.56 712.47 L548.34 713.22 L540.13 713.97 L531.91 714.71 L523.70 715.43 L515.48 716.16 L507.26 716.87 L499.05 717.58 L490.83 718.29 L482.62 719.00 L474.40 719.70 Z" fill="url(#shTopL)"/>
<path d="M358.00 664.20 L366.25 663.50 L374.50 662.81 L382.75 662.11 L391.00 661.41 L399.25 660.70 L407.50 659.99 L415.75 659.27 L424.00 658.54 L432.25 657.81 L440.50 657.06 L448.75 656.30 L457.00 655.53 L465.25 654.74 L473.50 653.94 L481.75 653.13 L490.00 652.29 L498.25 651.44 L506.50 650.57 L514.75 649.68 L523.00 648.76 L531.25 647.83 L539.50 646.87 L547.75 645.88 L556.00 644.87 L564.25 643.83 L572.50 642.76 L580.75 641.66 L589.00 640.53 L597.25 639.36 L605.50 638.17 L613.75 636.94 L622.00 635.67 L630.25 634.37 L638.50 633.02 L646.75 631.64 L655.00 630.22 L663.25 628.76 L671.50 627.25 L679.75 625.71 L688.00 624.11 L696.25 622.47 L704.50 620.79 L712.75 619.05 L721.00 617.26 L729.25 615.43 L737.50 613.54 L745.75 611.60 L754.00 609.61 L762.25 607.56 L770.50 605.45 L778.75 603.29 L787.00 601.07 L795.25 598.79 L803.50 596.46 L811.75 594.08 L820.00 591.64 L828.25 589.16 L836.50 586.63 L844.75 584.04 L853.00 581.41 L861.25 578.74 L869.50 576.01 L877.75 573.25 L886.00 570.44 L894.25 567.59 L902.50 564.70 L910.75 561.78 L919.00 558.81 L927.25 555.81 L935.50 552.77 L943.75 549.69 L952.00 546.59 L960.25 543.45 L968.50 540.28 L976.75 537.08 L985.00 533.85 L993.25 530.59 L1001.50 527.31 L1009.75 524.00 L1018.00 520.66 L1026.25 517.31 L1034.50 513.93 L1042.75 510.53 L1051.00 507.11 L1059.25 503.68 L1067.50 500.22 L1075.75 496.75 L1084.00 493.27 L1092.25 489.77 L1100.50 486.26 L1108.75 482.74 L1117.00 479.20 L1125.25 475.66 L1133.50 472.11 L1141.75 468.55 L1150.00 464.99 L1158.25 461.42 L1166.50 457.85 L1174.75 454.27 L1183.00 450.70 L1296.00 505.30 L1287.78 508.88 L1279.57 512.47 L1271.35 516.05 L1263.14 519.62 L1254.92 523.20 L1246.70 526.76 L1238.49 530.32 L1230.27 533.87 L1222.06 537.42 L1213.84 540.95 L1205.62 544.47 L1197.41 547.98 L1189.19 551.47 L1180.98 554.95 L1172.76 558.41 L1164.54 561.86 L1156.33 565.28 L1148.11 568.69 L1139.90 572.08 L1131.68 575.44 L1123.46 578.79 L1115.25 582.10 L1107.03 585.40 L1098.82 588.66 L1090.60 591.90 L1082.38 595.11 L1074.17 598.29 L1065.95 601.44 L1057.74 604.55 L1049.52 607.64 L1041.30 610.68 L1033.09 613.70 L1024.87 616.67 L1016.66 619.61 L1008.44 622.51 L1000.22 625.37 L992.01 628.18 L983.79 630.96 L975.58 633.69 L967.36 636.37 L959.14 639.01 L950.93 641.60 L942.71 644.15 L934.50 646.64 L926.28 649.08 L918.06 651.48 L909.85 653.81 L901.63 656.10 L893.42 658.33 L885.20 660.50 L876.98 662.62 L868.77 664.67 L860.55 666.68 L852.34 668.63 L844.12 670.52 L835.90 672.37 L827.69 674.16 L819.47 675.91 L811.26 677.60 L803.04 679.25 L794.82 680.85 L786.61 682.41 L778.39 683.93 L770.18 685.40 L761.96 686.83 L753.74 688.22 L745.53 689.57 L737.31 690.88 L729.10 692.16 L720.88 693.40 L712.66 694.60 L704.45 695.77 L696.23 696.91 L688.02 698.02 L679.80 699.10 L671.58 700.15 L663.37 701.17 L655.15 702.17 L646.94 703.14 L638.72 704.08 L630.50 705.01 L622.29 705.91 L614.07 706.79 L605.86 707.65 L597.64 708.49 L589.42 709.32 L581.21 710.13 L572.99 710.92 L564.78 711.70 L556.56 712.47 L548.34 713.22 L540.13 713.97 L531.91 714.71 L523.70 715.43 L515.48 716.16 L507.26 716.87 L499.05 717.58 L490.83 718.29 L482.62 719.00 L474.40 719.70 Z" fill="url(#shTopR)"/>
<path d="M474.40 719.70 L482.62 719.00 L490.83 718.29 L499.05 717.58 L507.26 716.87 L515.48 716.16 L523.70 715.43 L531.91 714.71 L540.13 713.97 L548.34 713.22 L556.56 712.47 L564.78 711.70 L572.99 710.92 L581.21 710.13 L589.42 709.32 L597.64 708.49 L605.86 707.65 L614.07 706.79 L622.29 705.91 L630.50 705.01 L638.72 704.08 L646.94 703.14 L655.15 702.17 L663.37 701.17 L671.58 700.15 L679.80 699.10 L688.02 698.02 L696.23 696.91 L704.45 695.77 L712.66 694.60 L720.88 693.40 L729.10 692.16 L737.31 690.88 L745.53 689.57 L753.74 688.22 L761.96 686.83 L770.18 685.40 L778.39 683.93 L786.61 682.41 L794.82 680.85 L803.04 679.25 L811.26 677.60 L819.47 675.91 L827.69 674.16 L835.90 672.37 L844.12 670.52 L852.34 668.63 L860.55 666.68 L868.77 664.67 L876.98 662.62 L885.20 660.50 L893.42 658.33 L901.63 656.10 L909.85 653.81 L918.06 651.48 L926.28 649.08 L934.50 646.64 L942.71 644.15 L950.93 641.60 L959.14 639.01 L967.36 636.37 L975.58 633.69 L983.79 630.96 L992.01 628.18 L1000.22 625.37 L1008.44 622.51 L1016.66 619.61 L1024.87 616.67 L1033.09 613.70 L1041.30 610.68 L1049.52 607.64 L1057.74 604.55 L1065.95 601.44 L1074.17 598.29 L1082.38 595.11 L1090.60 591.90 L1098.82 588.66 L1107.03 585.40 L1115.25 582.10 L1123.46 578.79 L1131.68 575.44 L1139.90 572.08 L1148.11 568.69 L1156.33 565.28 L1164.54 561.86 L1172.76 558.41 L1180.98 554.95 L1189.19 551.47 L1197.41 547.98 L1205.62 544.47 L1213.84 540.95 L1222.06 537.42 L1230.27 533.87 L1238.49 530.32 L1246.70 526.76 L1254.92 523.20 L1263.14 519.62 L1271.35 516.05 L1279.57 512.47 L1287.78 508.88 L1296.00 505.30 L1304.40 552.20 L1296.08 555.80 L1287.77 559.39 L1279.45 562.99 L1271.14 566.58 L1262.82 570.17 L1254.50 573.75 L1246.19 577.32 L1237.87 580.89 L1229.56 584.44 L1221.24 587.99 L1212.92 591.52 L1204.61 595.04 L1196.29 598.55 L1187.98 602.05 L1179.66 605.52 L1171.34 608.98 L1163.03 612.42 L1154.71 615.84 L1146.40 619.25 L1138.08 622.62 L1129.76 625.98 L1121.45 629.31 L1113.13 632.62 L1104.82 635.90 L1096.50 639.15 L1088.18 642.37 L1079.87 645.57 L1071.55 648.73 L1063.24 651.86 L1054.92 654.96 L1046.60 658.02 L1038.29 661.04 L1029.97 664.03 L1021.66 666.99 L1013.34 669.90 L1005.02 672.77 L996.71 675.60 L988.39 678.39 L980.08 681.13 L971.76 683.83 L963.44 686.49 L955.13 689.09 L946.81 691.65 L938.50 694.16 L930.18 696.61 L921.86 699.02 L913.55 701.37 L905.23 703.67 L896.92 705.91 L888.60 708.10 L880.28 710.23 L871.97 712.30 L863.65 714.32 L855.34 716.28 L847.02 718.19 L838.70 720.05 L830.39 721.86 L822.07 723.62 L813.76 725.33 L805.44 726.99 L797.12 728.61 L788.81 730.18 L780.49 731.71 L772.18 733.19 L763.86 734.64 L755.54 736.04 L747.23 737.41 L738.91 738.73 L730.60 740.02 L722.28 741.28 L713.96 742.50 L705.65 743.68 L697.33 744.83 L689.02 745.96 L680.70 747.05 L672.38 748.11 L664.07 749.15 L655.75 750.16 L647.44 751.14 L639.12 752.10 L630.80 753.04 L622.49 753.96 L614.17 754.85 L605.86 755.73 L597.54 756.58 L589.22 757.42 L580.91 758.24 L572.59 759.05 L564.28 759.85 L555.96 760.63 L547.64 761.40 L539.33 762.16 L531.01 762.91 L522.70 763.65 L514.38 764.39 L506.06 765.12 L497.75 765.84 L489.43 766.56 L481.12 767.28 L472.80 768.00 Z" fill="url(#shL)"/>
<path d="M474.40 719.70 L482.62 719.00 L490.83 718.29 L499.05 717.58 L507.26 716.87 L515.48 716.16 L523.70 715.43 L531.91 714.71 L540.13 713.97 L548.34 713.22 L556.56 712.47 L564.78 711.70 L572.99 710.92 L581.21 710.13 L589.42 709.32 L597.64 708.49 L605.86 707.65 L614.07 706.79 L622.29 705.91 L630.50 705.01 L638.72 704.08 L646.94 703.14 L655.15 702.17 L663.37 701.17 L671.58 700.15 L679.80 699.10 L688.02 698.02 L696.23 696.91 L704.45 695.77 L712.66 694.60 L720.88 693.40 L729.10 692.16 L737.31 690.88 L745.53 689.57 L753.74 688.22 L761.96 686.83 L770.18 685.40 L778.39 683.93 L786.61 682.41 L794.82 680.85 L803.04 679.25 L811.26 677.60 L819.47 675.91 L827.69 674.16 L835.90 672.37 L844.12 670.52 L852.34 668.63 L860.55 666.68 L868.77 664.67 L876.98 662.62 L885.20 660.50 L893.42 658.33 L901.63 656.10 L909.85 653.81 L918.06 651.48 L926.28 649.08 L934.50 646.64 L942.71 644.15 L950.93 641.60 L959.14 639.01 L967.36 636.37 L975.58 633.69 L983.79 630.96 L992.01 628.18 L1000.22 625.37 L1008.44 622.51 L1016.66 619.61 L1024.87 616.67 L1033.09 613.70 L1041.30 610.68 L1049.52 607.64 L1057.74 604.55 L1065.95 601.44 L1074.17 598.29 L1082.38 595.11 L1090.60 591.90 L1098.82 588.66 L1107.03 585.40 L1115.25 582.10 L1123.46 578.79 L1131.68 575.44 L1139.90 572.08 L1148.11 568.69 L1156.33 565.28 L1164.54 561.86 L1172.76 558.41 L1180.98 554.95 L1189.19 551.47 L1197.41 547.98 L1205.62 544.47 L1213.84 540.95 L1222.06 537.42 L1230.27 533.87 L1238.49 530.32 L1246.70 526.76 L1254.92 523.20 L1263.14 519.62 L1271.35 516.05 L1279.57 512.47 L1287.78 508.88 L1296.00 505.30 L1304.40 552.20 L1296.08 555.80 L1287.77 559.39 L1279.45 562.99 L1271.14 566.58 L1262.82 570.17 L1254.50 573.75 L1246.19 577.32 L1237.87 580.89 L1229.56 584.44 L1221.24 587.99 L1212.92 591.52 L1204.61 595.04 L1196.29 598.55 L1187.98 602.05 L1179.66 605.52 L1171.34 608.98 L1163.03 612.42 L1154.71 615.84 L1146.40 619.25 L1138.08 622.62 L1129.76 625.98 L1121.45 629.31 L1113.13 632.62 L1104.82 635.90 L1096.50 639.15 L1088.18 642.37 L1079.87 645.57 L1071.55 648.73 L1063.24 651.86 L1054.92 654.96 L1046.60 658.02 L1038.29 661.04 L1029.97 664.03 L1021.66 666.99 L1013.34 669.90 L1005.02 672.77 L996.71 675.60 L988.39 678.39 L980.08 681.13 L971.76 683.83 L963.44 686.49 L955.13 689.09 L946.81 691.65 L938.50 694.16 L930.18 696.61 L921.86 699.02 L913.55 701.37 L905.23 703.67 L896.92 705.91 L888.60 708.10 L880.28 710.23 L871.97 712.30 L863.65 714.32 L855.34 716.28 L847.02 718.19 L838.70 720.05 L830.39 721.86 L822.07 723.62 L813.76 725.33 L805.44 726.99 L797.12 728.61 L788.81 730.18 L780.49 731.71 L772.18 733.19 L763.86 734.64 L755.54 736.04 L747.23 737.41 L738.91 738.73 L730.60 740.02 L722.28 741.28 L713.96 742.50 L705.65 743.68 L697.33 744.83 L689.02 745.96 L680.70 747.05 L672.38 748.11 L664.07 749.15 L655.75 750.16 L647.44 751.14 L639.12 752.10 L630.80 753.04 L622.49 753.96 L614.17 754.85 L605.86 755.73 L597.54 756.58 L589.22 757.42 L580.91 758.24 L572.59 759.05 L564.28 759.85 L555.96 760.63 L547.64 761.40 L539.33 762.16 L531.01 762.91 L522.70 763.65 L514.38 764.39 L506.06 765.12 L497.75 765.84 L489.43 766.56 L481.12 767.28 L472.80 768.00 Z" fill="url(#shFrontR)"/>
<path d="M358 664.2 L474.4 719.7 L472.8 768 L354.8 713.4 Z" fill="url(#bEnd)"/>
<g fill="#bcc4f4" opacity="0.85"><path fill-rule="evenodd" d="M397 691 A12.5 13.5 0 1 1 414 703 L412 708 A12.5 13 0 0 1 397 691 Z M402.5 688 A7.5 5.5 20 1 0 417.5 692 A7.5 5.5 20 1 0 402.5 688 Z"/><path d="M420.7 676.5 L442.8 683.2 L420.7 716.3 L405.2 710.2 L412 695 Z"/></g>
<path d="M404 689 L428 698" stroke="#0018b0" stroke-width="3.2" opacity="0.75"/>
<g stroke="#4a4a4a" stroke-width="1.2" fill="none"><path d="M358 664.2 L1183 450.7"/><path d="M474.4 719.7 L1296 505.3"/><path d="M472.8 768 L1304.4 552.2"/></g>
<g stroke="#000" stroke-width="1.1" fill="none" opacity="0.35"><path d="M358.00 664.20 L366.25 663.50 L374.50 662.81 L382.75 662.11 L391.00 661.41 L399.25 660.70 L407.50 659.99 L415.75 659.27 L424.00 658.54 L432.25 657.81 L440.50 657.06 L448.75 656.30 L457.00 655.53 L465.25 654.74 L473.50 653.94 L481.75 653.13 L490.00 652.29 L498.25 651.44 L506.50 650.57 L514.75 649.68 L523.00 648.76 L531.25 647.83 L539.50 646.87 L547.75 645.88 L556.00 644.87 L564.25 643.83 L572.50 642.76 L580.75 641.66 L589.00 640.53 L597.25 639.36 L605.50 638.17 L613.75 636.94 L622.00 635.67 L630.25 634.37 L638.50 633.02 L646.75 631.64 L655.00 630.22 L663.25 628.76 L671.50 627.25 L679.75 625.71 L688.00 624.11 L696.25 622.47 L704.50 620.79 L712.75 619.05 L721.00 617.26 L729.25 615.43 L737.50 613.54 L745.75 611.60 L754.00 609.61 L762.25 607.56 L770.50 605.45 L778.75 603.29 L787.00 601.07 L795.25 598.79 L803.50 596.46 L811.75 594.08 L820.00 591.64 L828.25 589.16 L836.50 586.63 L844.75 584.04 L853.00 581.41 L861.25 578.74 L869.50 576.01 L877.75 573.25 L886.00 570.44 L894.25 567.59 L902.50 564.70 L910.75 561.78 L919.00 558.81 L927.25 555.81 L935.50 552.77 L943.75 549.69 L952.00 546.59 L960.25 543.45 L968.50 540.28 L976.75 537.08 L985.00 533.85 L993.25 530.59 L1001.50 527.31 L1009.75 524.00 L1018.00 520.66 L1026.25 517.31 L1034.50 513.93 L1042.75 510.53 L1051.00 507.11 L1059.25 503.68 L1067.50 500.22 L1075.75 496.75 L1084.00 493.27 L1092.25 489.77 L1100.50 486.26 L1108.75 482.74 L1117.00 479.20 L1125.25 475.66 L1133.50 472.11 L1141.75 468.55 L1150.00 464.99 L1158.25 461.42 L1166.50 457.85 L1174.75 454.27 L1183.00 450.70"/><path d="M474.40 719.70 L482.62 719.00 L490.83 718.29 L499.05 717.58 L507.26 716.87 L515.48 716.16 L523.70 715.43 L531.91 714.71 L540.13 713.97 L548.34 713.22 L556.56 712.47 L564.78 711.70 L572.99 710.92 L581.21 710.13 L589.42 709.32 L597.64 708.49 L605.86 707.65 L614.07 706.79 L622.29 705.91 L630.50 705.01 L638.72 704.08 L646.94 703.14 L655.15 702.17 L663.37 701.17 L671.58 700.15 L679.80 699.10 L688.02 698.02 L696.23 696.91 L704.45 695.77 L712.66 694.60 L720.88 693.40 L729.10 692.16 L737.31 690.88 L745.53 689.57 L753.74 688.22 L761.96 686.83 L770.18 685.40 L778.39 683.93 L786.61 682.41 L794.82 680.85 L803.04 679.25 L811.26 677.60 L819.47 675.91 L827.69 674.16 L835.90 672.37 L844.12 670.52 L852.34 668.63 L860.55 666.68 L868.77 664.67 L876.98 662.62 L885.20 660.50 L893.42 658.33 L901.63 656.10 L909.85 653.81 L918.06 651.48 L926.28 649.08 L934.50 646.64 L942.71 644.15 L950.93 641.60 L959.14 639.01 L967.36 636.37 L975.58 633.69 L983.79 630.96 L992.01 628.18 L1000.22 625.37 L1008.44 622.51 L1016.66 619.61 L1024.87 616.67 L1033.09 613.70 L1041.30 610.68 L1049.52 607.64 L1057.74 604.55 L1065.95 601.44 L1074.17 598.29 L1082.38 595.11 L1090.60 591.90 L1098.82 588.66 L1107.03 585.40 L1115.25 582.10 L1123.46 578.79 L1131.68 575.44 L1139.90 572.08 L1148.11 568.69 L1156.33 565.28 L1164.54 561.86 L1172.76 558.41 L1180.98 554.95 L1189.19 551.47 L1197.41 547.98 L1205.62 544.47 L1213.84 540.95 L1222.06 537.42 L1230.27 533.87 L1238.49 530.32 L1246.70 526.76 L1254.92 523.20 L1263.14 519.62 L1271.35 516.05 L1279.57 512.47 L1287.78 508.88 L1296.00 505.30"/><path d="M472.80 768.00 L481.12 767.28 L489.43 766.56 L497.75 765.84 L506.06 765.12 L514.38 764.39 L522.70 763.65 L531.01 762.91 L539.33 762.16 L547.64 761.40 L555.96 760.63 L564.28 759.85 L572.59 759.05 L580.91 758.24 L589.22 757.42 L597.54 756.58 L605.86 755.73 L614.17 754.85 L622.49 753.96 L630.80 753.04 L639.12 752.10 L647.44 751.14 L655.75 750.16 L664.07 749.15 L672.38 748.11 L680.70 747.05 L689.02 745.96 L697.33 744.83 L705.65 743.68 L713.96 742.50 L722.28 741.28 L730.60 740.02 L738.91 738.73 L747.23 737.41 L755.54 736.04 L763.86 734.64 L772.18 733.19 L780.49 731.71 L788.81 730.18 L797.12 728.61 L805.44 726.99 L813.76 725.33 L822.07 723.62 L830.39 721.86 L838.70 720.05 L847.02 718.19 L855.34 716.28 L863.65 714.32 L871.97 712.30 L880.28 710.23 L888.60 708.10 L896.92 705.91 L905.23 703.67 L913.55 701.37 L921.86 699.02 L930.18 696.61 L938.50 694.16 L946.81 691.65 L955.13 689.09 L963.44 686.49 L971.76 683.83 L980.08 681.13 L988.39 678.39 L996.71 675.60 L1005.02 672.77 L1013.34 669.90 L1021.66 666.99 L1029.97 664.03 L1038.29 661.04 L1046.60 658.02 L1054.92 654.96 L1063.24 651.86 L1071.55 648.73 L1079.87 645.57 L1088.18 642.37 L1096.50 639.15 L1104.82 635.90 L1113.13 632.62 L1121.45 629.31 L1129.76 625.98 L1138.08 622.62 L1146.40 619.25 L1154.71 615.84 L1163.03 612.42 L1171.34 608.98 L1179.66 605.52 L1187.98 602.05 L1196.29 598.55 L1204.61 595.04 L1212.92 591.52 L1221.24 587.99 L1229.56 584.44 L1237.87 580.89 L1246.19 577.32 L1254.50 573.75 L1262.82 570.17 L1271.14 566.58 L1279.45 562.99 L1287.77 559.39 L1296.08 555.80 L1304.40 552.20"/></g>
<g stroke="#000" stroke-width="2" fill="none" stroke-dasharray="5 11"><path d="M358.00 664.20 L366.25 663.50 L374.50 662.81 L382.75 662.11 L391.00 661.41 L399.25 660.70 L407.50 659.99 L415.75 659.27 L424.00 658.54 L432.25 657.81 L440.50 657.06 L448.75 656.30 L457.00 655.53 L465.25 654.74 L473.50 653.94 L481.75 653.13 L490.00 652.29 L498.25 651.44 L506.50 650.57 L514.75 649.68 L523.00 648.76 L531.25 647.83 L539.50 646.87 L547.75 645.88 L556.00 644.87 L564.25 643.83 L572.50 642.76 L580.75 641.66 L589.00 640.53 L597.25 639.36 L605.50 638.17 L613.75 636.94 L622.00 635.67 L630.25 634.37 L638.50 633.02 L646.75 631.64 L655.00 630.22 L663.25 628.76 L671.50 627.25 L679.75 625.71 L688.00 624.11 L696.25 622.47 L704.50 620.79 L712.75 619.05 L721.00 617.26 L729.25 615.43 L737.50 613.54 L745.75 611.60 L754.00 609.61 L762.25 607.56 L770.50 605.45 L778.75 603.29 L787.00 601.07 L795.25 598.79 L803.50 596.46 L811.75 594.08 L820.00 591.64 L828.25 589.16 L836.50 586.63 L844.75 584.04 L853.00 581.41 L861.25 578.74 L869.50 576.01 L877.75 573.25 L886.00 570.44 L894.25 567.59 L902.50 564.70 L910.75 561.78 L919.00 558.81 L927.25 555.81 L935.50 552.77 L943.75 549.69 L952.00 546.59 L960.25 543.45 L968.50 540.28 L976.75 537.08 L985.00 533.85 L993.25 530.59 L1001.50 527.31 L1009.75 524.00 L1018.00 520.66 L1026.25 517.31 L1034.50 513.93 L1042.75 510.53 L1051.00 507.11 L1059.25 503.68 L1067.50 500.22 L1075.75 496.75 L1084.00 493.27 L1092.25 489.77 L1100.50 486.26 L1108.75 482.74 L1117.00 479.20 L1125.25 475.66 L1133.50 472.11 L1141.75 468.55 L1150.00 464.99 L1158.25 461.42 L1166.50 457.85 L1174.75 454.27 L1183.00 450.70"/><path d="M474.40 719.70 L482.62 719.00 L490.83 718.29 L499.05 717.58 L507.26 716.87 L515.48 716.16 L523.70 715.43 L531.91 714.71 L540.13 713.97 L548.34 713.22 L556.56 712.47 L564.78 711.70 L572.99 710.92 L581.21 710.13 L589.42 709.32 L597.64 708.49 L605.86 707.65 L614.07 706.79 L622.29 705.91 L630.50 705.01 L638.72 704.08 L646.94 703.14 L655.15 702.17 L663.37 701.17 L671.58 700.15 L679.80 699.10 L688.02 698.02 L696.23 696.91 L704.45 695.77 L712.66 694.60 L720.88 693.40 L729.10 692.16 L737.31 690.88 L745.53 689.57 L753.74 688.22 L761.96 686.83 L770.18 685.40 L778.39 683.93 L786.61 682.41 L794.82 680.85 L803.04 679.25 L811.26 677.60 L819.47 675.91 L827.69 674.16 L835.90 672.37 L844.12 670.52 L852.34 668.63 L860.55 666.68 L868.77 664.67 L876.98 662.62 L885.20 660.50 L893.42 658.33 L901.63 656.10 L909.85 653.81 L918.06 651.48 L926.28 649.08 L934.50 646.64 L942.71 644.15 L950.93 641.60 L959.14 639.01 L967.36 636.37 L975.58 633.69 L983.79 630.96 L992.01 628.18 L1000.22 625.37 L1008.44 622.51 L1016.66 619.61 L1024.87 616.67 L1033.09 613.70 L1041.30 610.68 L1049.52 607.64 L1057.74 604.55 L1065.95 601.44 L1074.17 598.29 L1082.38 595.11 L1090.60 591.90 L1098.82 588.66 L1107.03 585.40 L1115.25 582.10 L1123.46 578.79 L1131.68 575.44 L1139.90 572.08 L1148.11 568.69 L1156.33 565.28 L1164.54 561.86 L1172.76 558.41 L1180.98 554.95 L1189.19 551.47 L1197.41 547.98 L1205.62 544.47 L1213.84 540.95 L1222.06 537.42 L1230.27 533.87 L1238.49 530.32 L1246.70 526.76 L1254.92 523.20 L1263.14 519.62 L1271.35 516.05 L1279.57 512.47 L1287.78 508.88 L1296.00 505.30"/><path d="M472.80 768.00 L481.12 767.28 L489.43 766.56 L497.75 765.84 L506.06 765.12 L514.38 764.39 L522.70 763.65 L531.01 762.91 L539.33 762.16 L547.64 761.40 L555.96 760.63 L564.28 759.85 L572.59 759.05 L580.91 758.24 L589.22 757.42 L597.54 756.58 L605.86 755.73 L614.17 754.85 L622.49 753.96 L630.80 753.04 L639.12 752.10 L647.44 751.14 L655.75 750.16 L664.07 749.15 L672.38 748.11 L680.70 747.05 L689.02 745.96 L697.33 744.83 L705.65 743.68 L713.96 742.50 L722.28 741.28 L730.60 740.02 L738.91 738.73 L747.23 737.41 L755.54 736.04 L763.86 734.64 L772.18 733.19 L780.49 731.71 L788.81 730.18 L797.12 728.61 L805.44 726.99 L813.76 725.33 L822.07 723.62 L830.39 721.86 L838.70 720.05 L847.02 718.19 L855.34 716.28 L863.65 714.32 L871.97 712.30 L880.28 710.23 L888.60 708.10 L896.92 705.91 L905.23 703.67 L913.55 701.37 L921.86 699.02 L930.18 696.61 L938.50 694.16 L946.81 691.65 L955.13 689.09 L963.44 686.49 L971.76 683.83 L980.08 681.13 L988.39 678.39 L996.71 675.60 L1005.02 672.77 L1013.34 669.90 L1021.66 666.99 L1029.97 664.03 L1038.29 661.04 L1046.60 658.02 L1054.92 654.96 L1063.24 651.86 L1071.55 648.73 L1079.87 645.57 L1088.18 642.37 L1096.50 639.15 L1104.82 635.90 L1113.13 632.62 L1121.45 629.31 L1129.76 625.98 L1138.08 622.62 L1146.40 619.25 L1154.71 615.84 L1163.03 612.42 L1171.34 608.98 L1179.66 605.52 L1187.98 602.05 L1196.29 598.55 L1204.61 595.04 L1212.92 591.52 L1221.24 587.99 L1229.56 584.44 L1237.87 580.89 L1246.19 577.32 L1254.50 573.75 L1262.82 570.17 L1271.14 566.58 L1279.45 562.99 L1287.77 559.39 L1296.08 555.80 L1304.40 552.20"/></g>
<g stroke="#101010" stroke-width="1.4" fill="none"><path d="M358 664.2 L474.4 719.7 L472.8 768 L354.8 713.4 Z"/><path d="M1183 450.7 L1296 505.3 L1304.4 552.2" stroke-dasharray="4 2"/></g>
<path d="M1301 506 L1332 497.7" stroke="#222" stroke-width="1.3"/>
<circle cx="1301" cy="506" r="5" fill="#2aa02a"/>
<defs><linearGradient id="gArr" x1="0" y1="0" x2="1" y2="0"><stop offset="0" stop-color="#0a66c8"/><stop offset="0.45" stop-color="#1080e0"/><stop offset="1" stop-color="#0860c0"/></linearGradient></defs>
<rect x="817.3" y="463" width="20" height="84" rx="2.5" fill="url(#gArr)"/>
<path d="M809 545 L848.4 545 L829 582.6 Z" fill="url(#gArr)"/>
<ellipse cx="1955" cy="252" rx="50" ry="18" fill="url(#gVCsh)"/>
<path d="M1911.6 167.7 L1952.8 181.2 L1954 265 L1915.4 232.8 Z" fill="url(#gVCf)"/>
<path d="M1952.8 181.2 L2017.3 171 L2015 239 L1954 265 Z" fill="url(#gVCf)"/>
<path d="M1911.6 167.7 L1970 156.8 L2017.3 171 L1952.8 181.2 Z" fill="#f2f2f2"/>
<g fill="none" stroke="#8a8a8a" stroke-width="1.1" stroke-dasharray="4 2.5"><path d="M1911.6 167.7 L1952.8 181.2 L2017.3 171 M1911.6 167.7 L1970 156.8 L2017.3 171 M1911.6 167.7 L1915.4 232.8 M2017.3 171 L2015 239"/></g>
<path d="M1952.5 170 L1954 265" stroke="#3a3adc" stroke-width="2"/>
<path d="M1954 265 L2024 236" stroke="#e06060" stroke-width="2.2"/>
<path d="M1954 265 L1912 232" stroke="#70c070" stroke-width="2.2"/>
<text x="1951.5" y="165.5" font-size="24" font-weight="bold" fill="#7272ee" text-anchor="middle" transform="translate(1951.5 165.5) scale(0.85 1) translate(-1951.5 -165.5)">Z</text>
<text x="1906" y="236" font-size="20" font-weight="bold" fill="#8ee08e" text-anchor="middle">Y</text>
<text x="2030.5" y="243" font-size="20" fill="#f49a9a" text-anchor="middle" stroke="#f49a9a" stroke-width="0.6">X</text>
<text transform="translate(1964.5 229.5) rotate(-15) scale(0.7 1.0)" font-size="20" font-weight="bold" fill="#9c9c9c">FRONT</text>
<text transform="translate(1925 212) rotate(30) scale(0.5 1)" font-size="17" font-weight="bold" fill="#a4a4a4">LEFT</text>
<rect x="1292.4" y="464" width="205" height="34.3" rx="17.1" fill="#b1b1b1"/>
<text transform="translate(1342.60 488.10) scale(0.9518 1)" font-size="21.95" font-weight="bold" fill="#111" stroke="#111" stroke-width="0.15">Min: 0 mm</text>
<rect x="844.6" y="672.4" width="204.4" height="33.6" rx="16.8" fill="#bababa"/>
<text transform="translate(861.21 696.50) scale(0.9799 1)" font-size="21.22" font-weight="bold" fill="#111" stroke="#111" stroke-width="0.15">Max: 0.01471 mm</text>
<rect x="1594" y="475" width="192" height="37.7" fill="#cccccc"/>
<rect x="1594" y="475" width="53" height="37.7" rx="1" fill="#1ba6df"/>
<path d="M1606.4 487.2 L1615.1 495.4 L1628.9 481.3 M1606.4 497.2 L1615.1 505.6 L1628.9 491.5" fill="none" stroke="#ffffff" stroke-width="3"/>
<text transform="translate(1661.39 499.80) scale(0.9849 1)" font-size="19.91" fill="#3c3c3c" stroke="#3c3c3c" stroke-width="0.45">Load Case1</text>
<path d="M1771.3 488.7 L1786.3 488.7 L1778.8 498.5 Z" fill="#222"/>
<rect x="1594" y="527" width="173" height="36.7" fill="#cccccc"/>
<text transform="translate(1608.00 551.90) scale(1.0041 1)" font-size="20.64" fill="#3c3c3c" stroke="#3c3c3c" stroke-width="0.45">Displacement</text>
<path d="M1747 540.3 L1762.3 540.3 L1754.7 550.6 Z" fill="#222"/>
<rect x="1594" y="578.4" width="87" height="37.1" fill="#cccccc"/>
<text transform="translate(1608.62 603.40) scale(1.0377 1)" font-size="20.64" fill="#3c3c3c" stroke="#3c3c3c" stroke-width="0.45">Total</text>
<path d="M1661.2 591.8 L1676.7 591.8 L1669 602.1 Z" fill="#222"/>
<rect x="1594" y="630.4" width="104" height="36.6" fill="#cccccc"/>
<text transform="translate(1608.77 655.00) scale(0.9794 1)" font-size="21.97" fill="#3c3c3c" stroke="#3c3c3c" stroke-width="0.45">mm</text>
<path d="M1676 643.9 L1691.4 643.9 L1683.7 654.2 Z" fill="#222"/>
<rect x="1594" y="681.5" width="106" height="37.5" fill="#cccccc"/>
<path d="M1631.6 700.9 L1630.7 705.5 L1627.2 704.8 L1625.2 707.7 L1627.2 710.7 L1623.3 713.3 L1621.4 710.3 L1617.9 711.0 L1617.2 714.5 L1612.6 713.6 L1613.3 710.1 L1610.4 708.1 L1607.4 710.1 L1604.8 706.2 L1607.8 704.3 L1607.1 700.8 L1603.6 700.1 L1604.5 695.5 L1608.0 696.2 L1610.0 693.3 L1608.0 690.3 L1611.9 687.7 L1613.8 690.7 L1617.3 690.0 L1618.0 686.5 L1622.6 687.4 L1621.9 690.9 L1624.8 692.9 L1627.8 690.9 L1630.4 694.8 L1627.4 696.7 L1628.1 700.2 Z" fill="#444"/><circle cx="1617.6" cy="700.5" r="4.3" fill="#cccccc"/>
<path d="M1664.6 706.6 L1677.5 694.5 L1677.5 706.6 Z" fill="url(#gTri)" stroke="#111" stroke-width="0.8"/>
<rect x="1797" y="467" width="41" height="421" rx="3" fill="#000" opacity="0.35" filter="url(#blur4)"/>
<rect x="1800" y="470" width="34.6" height="414" fill="url(#gBar)"/>
<rect x="1834.6" y="469.0" width="17" height="2" fill="#666"/>
<rect x="1834.6" y="545.5" width="17" height="2" fill="#666"/>
<rect x="1834.6" y="629.7" width="17" height="2" fill="#666"/>
<rect x="1834.6" y="713.9" width="17" height="2" fill="#666"/>
<rect x="1834.6" y="798.3" width="17" height="2" fill="#666"/>
<rect x="1834.6" y="883.0" width="17" height="2" fill="#666"/>
<rect x="1834.6" y="503.6" width="8.5" height="2" fill="#777"/>
<rect x="1834.6" y="587.8" width="8.5" height="2" fill="#777"/>
<rect x="1834.6" y="671.8" width="8.5" height="2" fill="#777"/>
<rect x="1834.6" y="756.0" width="8.5" height="2" fill="#777"/>
<rect x="1834.6" y="840.4" width="8.5" height="2" fill="#777"/>
<text transform="translate(1884.68 477.80) scale(1.0535 1)" font-size="19.77" font-weight="bold" fill="#1e1e1e" stroke="#1e1e1e" stroke-width="0.15">0.01471 Max.</text>
<text transform="translate(1884.68 553.70) scale(0.9736 1)" font-size="21.37" font-weight="bold" fill="#1e1e1e" stroke="#1e1e1e" stroke-width="0.15">0.012</text>
<text transform="translate(1884.68 638.20) scale(0.9724 1)" font-size="21.37" font-weight="bold" fill="#1e1e1e" stroke="#1e1e1e" stroke-width="0.15">0.009</text>
<text transform="translate(1884.88 722.20) scale(0.9835 1)" font-size="21.08" font-weight="bold" fill="#1e1e1e" stroke="#1e1e1e" stroke-width="0.15">0.006</text>
<text transform="translate(1884.88 806.40) scale(1.0259 1)" font-size="20.20" font-weight="bold" fill="#1e1e1e" stroke="#1e1e1e" stroke-width="0.15">0.003</text>
<text transform="translate(1884.87 891.00) scale(0.9611 1)" font-size="21.80" font-weight="bold" fill="#1e1e1e" stroke="#1e1e1e" stroke-width="0.15">0 Min.</text></svg></body></html>
